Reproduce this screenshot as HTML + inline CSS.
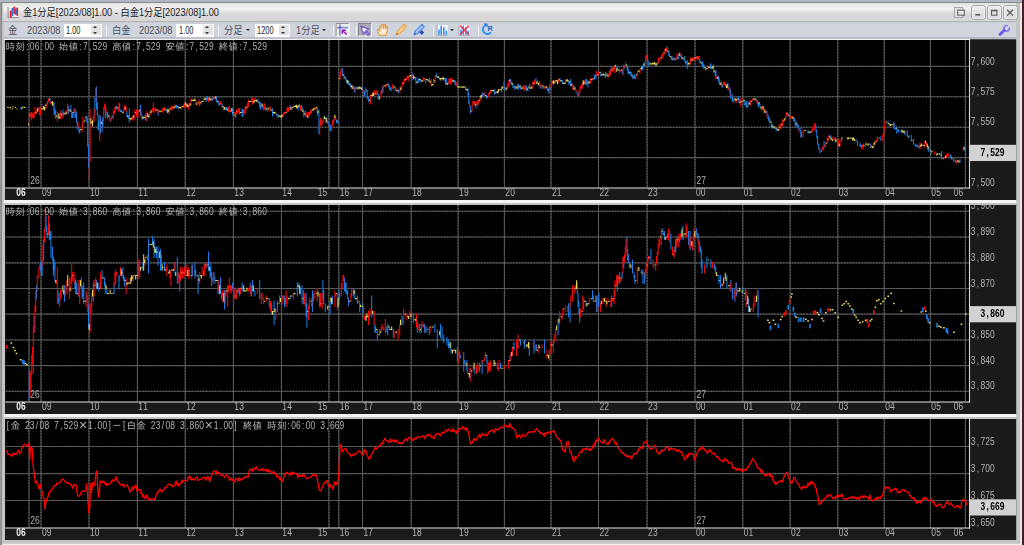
<!DOCTYPE html>
<html lang="ja"><head><meta charset="utf-8"><title>金1分足</title>
<style>
html,body{margin:0;padding:0}
body{width:1024px;height:545px;overflow:hidden;position:relative;background:#b1b5c1;font-family:"Liberation Sans","Noto Sans CJK JP",sans-serif}
.abs{position:absolute}
#dark{left:1021.8px;top:0;width:3px;height:545px;background:#442026}
#frame{left:0;top:1.8px;width:1022px;height:544px;background:linear-gradient(90deg,#999 0,#999 1px,#888 1px,#888 100%)}
#frame2{left:1.6px;top:3.4px;width:1020.2px;height:541.6px;background:linear-gradient(90deg,#c4c4c4 0,#c4c4c4 1018px,#e8e8ea 1018px);box-shadow:inset 0 -1.3px 0 #f0f0f0}
#title{left:2.8px;top:3.4px;width:1013.4px;height:17.4px;background:linear-gradient(180deg,#e2e2e2 0,#eeeeee 20%,#f0f0f0 35%,#e0e0e0 52%,#d8d8d8 62%,#d8d8d8 100%);border-bottom:0.9px solid #b2b2b2}
#ttext{left:23.4px;top:3.8px;height:17px;line-height:17px;font-size:10.6px;color:#1c1c1c;white-space:nowrap;transform:scaleX(.871);transform-origin:0 0}
#tool{left:3.7px;top:21.7px;width:1012.5px;height:17.2px;background:linear-gradient(180deg,#c6c9d1 0,#d0d4dd 1px,#d0d4dd 14.6px,#b4b9c6 15.2px,#b4b9c6 100%)}
.tl{position:absolute;top:24.4px;height:13px;line-height:13px;font-size:10.2px;color:#4a4f5c;white-space:nowrap;transform:scaleX(.91);transform-origin:0 0}
.inp{position:absolute;top:23.6px;height:13.2px;background:#fff;box-shadow:0 0 0 .5px #c9ccd4}
.inp span{position:absolute;left:2.2px;top:2.1px;font-size:10.2px;line-height:10px;color:#222;transform:scaleX(.73);transform-origin:0 0}
.spin{position:absolute;top:1.6px;right:1.2px;width:10px;height:10.2px;background:#e2e2e2;border-radius:1px}
.spin:before{content:"";position:absolute;left:2.5px;top:1.2px;border:2.5px solid transparent;border-top:0;border-bottom:2.6px solid #2c2c2c}
.spin:after{content:"";position:absolute;left:2.5px;bottom:1.2px;border:2.5px solid transparent;border-bottom:0;border-top:2.6px solid #2c2c2c}
.sep{position:absolute;top:26px;width:1.2px;height:10px;background:#eef0f4}
.dd{position:absolute;top:29.3px;width:0;height:0;border:2.5px solid transparent;border-bottom:0;border-top:2.8px solid #2a2a2a}
.wb{position:absolute;top:5.6px;width:13px;height:13.8px;border-radius:3px;background:linear-gradient(180deg,#ececec,#dadada);box-shadow:0 0 0 1px #a6a6a6, inset 0 0 0 .8px #f2f2f2}
</style></head><body>
<div class="abs" id="dark"></div>
<div class="abs" id="frame"></div>
<div class="abs" id="frame2"></div>
<div class="abs" id="title"></div>
<div class="abs" id="ttext">金1分足[2023/08]1.00 - 白金1分足[2023/08]1.00</div>
<div class="abs" id="tool"></div>
<span class="tl" style="left:8.3px">金</span>
<span class="tl" style="left:26.8px;letter-spacing:0">2023/08</span>
<div class="inp" style="left:63.8px;width:38.2px"><span>1.00</span><i class="spin"></i></div>
<div class="sep" style="left:105.6px"></div>
<span class="tl" style="left:112px;letter-spacing:0">白金</span>
<span class="tl" style="left:139px;letter-spacing:0">2023/08</span>
<div class="inp" style="left:176.4px;width:37.6px"><span>1.00</span><i class="spin"></i></div>
<div class="sep" style="left:218.3px"></div>
<span class="tl" style="left:224px;letter-spacing:0">分足</span>
<i class="dd" style="left:246px"></i>
<div class="inp" style="left:254.8px;width:35px"><span>1200</span><i class="spin"></i></div>
<span class="tl" style="left:296px;letter-spacing:0">1分足</span>
<i class="dd" style="left:322px"></i>
<i class="dd" style="left:449.6px"></i>
<div class="sep" style="left:332.6px"></div>
<div class="sep" style="left:355.8px"></div>
<div class="sep" style="left:432.6px"></div>
<div class="sep" style="left:477.8px"></div>
<div class="wb" style="left:971.9px"></div><div class="wb" style="left:987.7px"></div><div class="wb" style="left:1003.5px"></div>
<svg width="1024" height="40" viewBox="0 0 1024 40" style="position:absolute;left:0;top:0">
<!-- title icon -->
<rect x="8.6" y="7.2" width="10" height="10" fill="#f4f4f4"/>
<path d="M8.1 7.1V17.6H18.7" stroke="#8a8a8a" stroke-width="1" fill="none"/>
<path d="M10.7 11.4V16.5M14.4 7.6V13.2M17.2 8.6V14.9" stroke="#f01828" stroke-width="2" stroke-linecap="round"/>
<path d="M12.4 8.6V15.4M15.8 9.6V14" stroke="#1c78e0" stroke-width="1.9" stroke-linecap="round"/>
<!-- window buttons -->
<rect x="954.4" y="7.5" width="8.4" height="10" fill="#e4e4e4" stroke="#a4a4a4" stroke-width="1"/>
<rect x="957.6" y="10.2" width="6.8" height="5" fill="#e6e6e6" stroke="#767676" stroke-width="1.3"/>
<rect x="975.3" y="13.9" width="4.9" height="1.7" fill="#606060"/>
<rect x="991.5" y="10.6" width="5.4" height="4.6" fill="none" stroke="#606060" stroke-width="1.1"/>
<rect x="991" y="9.7" width="6.4" height="1.6" fill="#606060"/>
<path d="M1007.1 9.7L1012.9 15.6M1012.9 9.7L1007.1 15.6" stroke="#5a5a5a" stroke-width="1.35"/>
<!-- wrench -->
<circle cx="1006.6" cy="28.3" r="2.7" fill="#dcd8f6" stroke="#8a82e6" stroke-width="1.8"/>
<path d="M1006.6 28.3L1008.9 23.6L1011.6 26.4Z" fill="#d0d4dd"/>
<path d="M999.9 34.4L1004.3 30.3" stroke="#6658f2" stroke-width="2.7" stroke-linecap="round" fill="none"/>
<!-- icon1: crosshair toggle (pressed) -->
<rect x="335.6" y="22.9" width="13.4" height="13.2" fill="#ecece8"/>
<path d="M336.1 36.1V23.4H349" stroke="#8c8c8c" stroke-width="1" fill="none"/>
<path d="M336.1 36H349.2V23.4" stroke="#f6f6f6" stroke-width="1" fill="none"/>
<path d="M339.9 24.2V35.4M337 27.6H348.2" stroke="#8e8edc" stroke-width="1.7"/>
<circle cx="339.9" cy="27.6" r="1.1" fill="#5c5cc8"/>
<path d="M342.3 30.2H345.4M342.3 30.2V33.3M342.6 30.5L346.4 34.2" stroke="#9222b0" stroke-width="1.5" stroke-linecap="round" fill="none"/>
<!-- icon2: cursor (pressed) -->
<rect x="358" y="22.9" width="13.4" height="13.2" fill="#a9abb0"/>
<path d="M358.5 36.1V23.4H371.4" stroke="#858585" stroke-width="1" fill="none"/>
<path d="M358.5 36H371.6V23.4" stroke="#f4f4f6" stroke-width="1" fill="none"/>
<path d="M360.8 25.9L368.6 29.2L366 30.7L369.6 34.2L368.2 35.2L364.9 31.8L363.2 34.1Z" fill="#f0ecfb" stroke="#7a5fc8" stroke-width="1.3" stroke-linejoin="round"/>
<!-- icon3: hand -->
<path d="M379.6 35.3C378.6 33 377.4 31.3 377.3 30.2C377.4 29.2 378.5 29.3 379.3 30.4L380 31.3L379.6 26.6C379.6 25.4 381 25.4 381.2 26.5L381.6 28.6L381.8 25.2C381.9 24 383.4 24.1 383.5 25.2L383.6 28.4L384.3 25.3C384.6 24.3 385.9 24.6 385.8 25.7L385.5 28.9L386.3 27.2C386.8 26.3 387.8 26.7 387.6 27.7C387.2 30.2 387.2 33 385.4 35.4Z" fill="#fff1dc" stroke="#e39a35" stroke-width="1.1" stroke-linejoin="round"/>
<!-- icon4: pencil -->
<path d="M396.2 34.8L397.4 31.2L404.2 24.4L406.5 26.7L399.8 33.5Z" fill="#fad9a0" stroke="#e8a040" stroke-width="1.2" stroke-linejoin="round"/>
<path d="M396 35L397 32.8L398.2 34Z" fill="#a06820"/>
<!-- icon5: blue pencil + diamond -->
<path d="M414 34.8L415.2 31.2L422 24.4L424.3 26.7L417.6 33.5Z" fill="#a8c8f8" stroke="#4a86e0" stroke-width="1.2" stroke-linejoin="round"/>
<path d="M413.8 35L414.8 32.8L416 34Z" fill="#2858b0"/>
<path d="M421.8 30.1L424.2 32.5L421.8 34.9L419.4 32.5Z" fill="#2a52b4"/>
<!-- icon6: bar chart -->
<rect x="437" y="25" width="10.8" height="10" fill="#f4f5f8"/>
<path d="M437 25V35.2H447.8" stroke="#a8a8a8" stroke-width="1" fill="none"/>
<path d="M439 29.6V34.8M441.2 25.8V34.8M443.8 27.3V34.8M446.3 30.8V34.8" stroke="#2a86ff" stroke-width="1.5"/>
<!-- icon7: chart with red x -->
<rect x="459" y="25" width="10.8" height="10" fill="#f0f1f4"/>
<path d="M459 25V35.2H469.8" stroke="#a8a8a8" stroke-width="1" fill="none"/>
<path d="M461 29.6V34.8M463.2 25.8V34.8M465.8 27.3V34.8M468.3 30.8V34.8" stroke="#3a8cf8" stroke-width="1.5"/>
<path d="M460.2 25.8L468.8 34.4M468.8 25.8L460.2 34.4" stroke="#f03040" stroke-width="1.4"/>
<!-- icon8: refresh R -->
<path d="M485.5 25.3A4.6 4.6 0 1 0 491 32.4" fill="none" stroke="#2a92ee" stroke-width="1.9"/>
<path d="M483.3 23.6H487.6V27.6Z" fill="#2a76e8"/>
</svg>
<span class="abs" style="left:487.6px;top:25.3px;font:bold 7.2px/8px 'Liberation Sans',sans-serif;color:#1a64c0">R</span>

<svg width="1024" height="545" viewBox="0 0 1024 545" style="position:absolute;left:0;top:0;will-change:transform">
<style>.n{font-family:"Liberation Sans",sans-serif;text-anchor:middle}.w{font-family:"Liberation Sans","IPAGothic","Noto Sans CJK JP",sans-serif;text-anchor:middle}</style>
<rect x="5" y="39.3" width="1011.2" height="160.7" fill="#1a1a1a"/>
<rect x="5.8" y="39.9" width="963.7" height="148.1" fill="#000"/>
<path d="M5.8 66.4H969.5M5.8 96.8H969.5M5.8 127.2H969.5M5.8 157.6H969.5M29.0 39.9V188.0M41.0 39.9V188.0M89.0 39.9V188.0M137.4 39.9V188.0M185.2 39.9V188.0M233.4 39.9V188.0M281.4 39.9V188.0M328.9 39.9V188.0M338.8 39.9V188.0M362.5 39.9V188.0M411.2 39.9V188.0M458.1 39.9V188.0M504.4 39.9V188.0M551.0 39.9V188.0M598.5 39.9V188.0M647.1 39.9V188.0M695.0 39.9V188.0M742.8 39.9V188.0M790.1 39.9V188.0M837.8 39.9V188.0M884.2 39.9V188.0M930.4 39.9V188.0M965.4 39.9V188.0" stroke="#444444" stroke-width="1.1" fill="none"/>
<path d="M5.8 66.4H969.5M5.8 96.8H969.5M5.8 127.2H969.5M5.8 157.6H969.5M29.0 39.9V188.0M41.0 39.9V188.0M89.0 39.9V188.0M137.4 39.9V188.0M185.2 39.9V188.0M233.4 39.9V188.0M281.4 39.9V188.0M328.9 39.9V188.0M338.8 39.9V188.0M362.5 39.9V188.0M411.2 39.9V188.0M458.1 39.9V188.0M504.4 39.9V188.0M551.0 39.9V188.0M598.5 39.9V188.0M647.1 39.9V188.0M695.0 39.9V188.0M742.8 39.9V188.0M790.1 39.9V188.0M837.8 39.9V188.0M884.2 39.9V188.0M930.4 39.9V188.0M965.4 39.9V188.0" stroke="#6e6e6e" stroke-width="1" stroke-dasharray="1.45 1.45" fill="none"/>
<path d="M33.3 113.2V117.9M38.9 107.1V110.6M45.3 103.4V109.4M47.7 101.0V104.5M50.1 98.6V103.3M53.3 102.2V107.0M54.1 102.2V115.5M54.9 108.3V114.3M55.7 110.7V119.1M58.1 114.4V117.9M62.9 109.5V116.7M63.7 112.0V115.5M68.5 105.9V114.3M70.9 104.7V111.8M71.7 110.7V117.9M72.5 112.0V117.9M74.1 108.3V117.9M75.7 109.5V117.9M76.5 112.0V122.8M77.3 121.7V128.9M78.9 126.6V132.5M79.7 129.0V133.7M83.7 120.5V122.8M86.9 115.6V122.8M87.7 118.0V147.1M88.5 144.8V167.8M94.9 97.4V115.5M96.5 86.4V109.4M97.3 102.2V115.5M98.1 114.4V130.5M98.9 120.5V130.1M100.5 115.6V133.7M102.1 119.3V132.5M102.9 116.8V126.4M105.3 104.7V117.9M106.9 112.0V116.7M107.7 112.0V119.1M110.1 118.0V121.7M112.5 115.6V117.9M116.5 105.9V109.4M119.7 103.4V110.6M120.5 109.5V111.8M122.1 110.7V113.1M126.9 110.7V116.7M128.5 115.6V119.1M129.3 108.3V122.8M134.1 115.6V117.9M137.3 109.5V115.5M140.5 104.7V115.5M142.1 114.4V120.4M145.3 114.4V120.4M146.1 114.4V120.4M149.3 113.2V117.9M158.1 109.5V115.5M166.9 108.3V111.8M175.7 104.7V107.0M176.5 104.7V108.2M178.1 105.9V109.4M199.7 101.0V105.8M206.1 97.4V102.1M206.9 96.2V99.7M207.7 96.2V100.9M212.5 97.4V100.9M214.9 96.2V99.7M216.5 96.2V102.1M217.3 99.8V103.3M218.9 101.0V105.8M222.1 103.4V107.0M223.7 105.9V110.6M226.1 107.1V110.6M226.9 107.1V110.6M232.5 108.3V115.5M235.7 112.0V117.9M239.7 108.3V114.3M242.1 108.3V116.7M242.9 109.5V116.7M243.7 109.5V113.1M257.3 98.6V102.1M258.1 99.8V103.3M259.7 102.2V108.2M260.5 102.2V109.4M262.9 105.9V109.4M265.3 107.1V110.6M266.9 107.1V110.6M272.5 108.3V116.7M276.5 113.2V115.5M278.1 114.4V117.9M287.7 107.1V111.8M290.1 104.7V109.4M298.1 104.7V110.6M301.3 104.7V110.6M302.1 105.9V111.8M303.7 110.7V116.7M305.3 110.7V116.7M311.7 109.5V113.1M317.3 107.1V115.5M318.9 109.5V133.7M321.3 119.3V124.0M326.9 116.8V121.7M327.7 120.5V124.0M328.5 121.7V126.4M330.1 124.1V131.3M330.9 125.3V131.1M336.5 119.3V123.2M338.1 120.5V124.0M342.4 68.2V76.2M344.0 74.3V79.0M345.6 76.7V80.6M346.4 79.1V82.7M348.8 81.6V85.1M350.4 82.8V87.5M354.4 86.4V92.4M356.8 86.4V88.7M357.6 86.4V90.0M362.4 86.4V90.0M364.0 90.1V97.2M364.8 91.3V96.0M366.4 88.9V91.2M367.2 90.1V98.5M368.0 96.2V99.7M368.8 97.4V102.6M375.2 91.3V94.8M377.6 91.3V94.8M378.4 93.7V98.8M382.4 86.4V93.6M388.0 82.8V86.3M388.8 85.2V87.5M389.6 85.2V90.0M390.4 87.6V90.0M391.2 87.6V91.2M393.6 85.2V88.7M395.2 86.4V91.2M398.4 88.9V93.6M412.8 73.0V80.2M415.2 76.7V80.2M416.0 76.7V83.9M418.4 77.9V82.7M420.8 79.1V82.7M424.0 77.9V81.4M428.0 79.1V81.4M429.6 77.9V82.7M436.8 73.0V77.8M439.2 76.7V80.2M444.8 77.9V81.4M445.6 77.9V85.1M446.4 77.9V83.9M454.4 80.3V82.7M455.2 80.3V85.1M456.0 82.8V86.3M457.6 82.8V87.5M465.6 86.4V90.0M468.0 87.6V96.0M468.8 92.5V104.1M470.4 105.9V113.5M473.6 101.0V103.3M476.0 103.4V108.2M477.6 101.0V105.8M482.4 92.5V97.2M484.8 92.5V96.0M486.4 94.9V98.8M494.4 88.9V94.8M496.0 91.3V93.6M501.6 86.4V92.4M504.0 81.6V90.0M504.8 86.4V90.0M510.4 79.1V83.9M512.8 82.8V87.5M514.4 86.4V88.8M515.2 85.2V90.0M517.6 84.0V88.7M518.4 84.0V90.0M520.8 85.2V90.0M526.4 85.2V91.2M528.0 86.4V91.2M529.6 84.0V88.7M532.0 85.2V88.7M536.0 77.9V82.7M539.2 81.6V86.3M540.8 85.2V88.7M543.2 85.2V88.7M547.2 86.4V91.2M548.8 87.6V93.6M550.4 87.6V90.0M560.0 77.9V81.4M562.4 80.3V83.9M568.8 80.3V85.1M570.4 79.1V86.3M572.0 82.8V86.3M573.6 85.2V90.0M575.2 86.4V90.0M576.8 91.3V93.6M578.4 92.5V96.0M585.6 79.1V85.1M586.4 79.1V85.1M587.2 81.6V83.9M588.0 80.3V87.5M594.4 75.5V80.2M595.2 74.3V77.8M596.0 74.3V79.0M600.8 71.8V76.6M604.8 74.3V76.6M605.6 71.8V77.8M607.2 73.0V76.6M609.6 70.6V75.4M611.2 67.0V71.7M616.0 65.8V70.5M617.6 67.0V70.5M620.0 69.4V72.9M622.4 69.4V74.1M624.0 64.5V69.3M627.2 64.5V70.5M628.0 67.0V74.1M628.8 70.6V74.1M630.4 71.8V75.4M631.2 71.8V76.6M632.8 74.3V79.0M634.4 74.3V79.0M635.2 75.5V79.1M642.4 65.8V70.5M643.2 64.5V69.3M644.8 62.1V66.9M647.2 54.8V60.8M648.0 59.7V63.2M648.8 62.1V66.9M659.2 58.5V60.8M667.2 46.3V52.3M668.8 49.9V55.9M669.6 53.6V57.1M671.2 56.0V59.6M672.0 56.0V60.8M674.4 57.2V60.8M678.4 54.8V59.6M680.8 53.6V57.1M681.6 54.8V59.6M683.2 57.2V59.6M684.8 56.0V62.0M685.6 60.9V64.4M686.4 60.9V63.2M687.2 59.7V69.3M693.6 57.2V60.8M697.6 56.0V59.6M699.2 56.0V61.5M700.0 59.7V63.2M701.6 62.1V64.4M702.4 60.9V66.9M703.2 63.3V68.1M704.0 64.5V69.3M705.6 67.0V70.5M710.4 63.3V69.3M711.2 64.5V69.3M713.6 64.5V72.9M715.2 70.6V75.4M716.0 70.6V79.0M718.4 75.5V81.4M719.2 77.9V85.1M720.0 81.6V85.1M722.4 84.0V87.5M725.6 82.8V86.3M728.0 82.8V90.0M730.4 88.9V98.5M732.0 93.7V100.9M732.8 97.4V102.1M735.2 97.4V102.1M738.4 96.2V100.9M739.2 98.6V103.3M744.8 99.8V105.8M746.4 101.0V108.2M748.0 101.0V107.0M752.0 99.8V102.1M756.0 98.6V102.1M757.6 99.8V104.5M758.4 102.2V107.0M760.0 103.4V108.2M761.6 105.9V110.6M766.4 110.7V114.4M768.0 114.4V119.1M768.8 116.8V121.6M769.6 118.0V122.8M771.2 120.5V126.4M772.8 124.1V128.9M775.2 126.6V128.9M776.8 127.8V131.3M788.0 113.2V116.7M789.6 114.4V117.9M793.6 116.8V121.6M794.4 118.0V121.6M795.2 120.5V126.4M796.8 121.7V126.4M797.6 124.1V127.7M798.4 125.3V129.9M800.8 127.8V137.4M801.6 131.4V137.4M808.0 130.2V133.7M815.2 124.1V126.4M816.0 125.3V132.0M816.8 130.2V138.6M817.6 136.3V144.7M818.4 143.6V149.5M820.0 148.4V153.4M821.6 149.7V152.0M823.2 147.2V149.5M824.0 141.1V148.3M830.4 135.1V138.6M835.2 137.5V142.2M841.6 137.5V141.0M856.0 138.7V142.2M857.6 141.1V145.9M860.0 142.4V147.1M860.8 144.8V147.1M861.6 144.8V148.3M870.4 143.6V148.3M880.8 136.3V141.0M888.0 120.5V125.2M889.6 122.9V126.4M894.4 122.9V130.1M896.8 126.6V133.7M898.4 129.0V132.5M900.0 130.2V132.5M901.6 129.0V132.5M904.8 131.4V134.9M907.2 130.2V136.2M908.0 135.1V137.4M911.2 135.1V141.0M913.6 138.7V144.7M915.2 143.6V145.9M916.0 144.8V147.1M916.8 144.8V147.1M917.6 144.8V147.1M918.4 146.0V148.3M928.8 146.0V152.0M931.2 149.7V154.4M940.0 153.3V155.6M941.6 150.9V159.3M947.2 154.5V156.8M950.4 154.5V158.1M951.2 155.7V159.3M953.6 158.2V161.7M955.2 159.4V162.2M956.0 160.6V162.9M959.2 159.4V162.9M960.0 159.4V162.9M964.8 146.0V150.8M965.6 148.4V155.6M20.9 107.0V109.7" stroke="#1b7be0" stroke-width="1.05" fill="none" clip-path="url(#p0)"/>
<path d="M29.3 113.3V126.4M30.9 112.0V117.9M31.7 112.0V120.4M32.5 113.2V117.9M34.1 112.0V117.9M34.9 107.1V114.3M36.5 110.7V114.3M38.1 107.1V111.8M39.7 107.1V115.5M40.5 108.3V115.5M41.3 104.7V111.8M46.9 103.4V108.2M48.5 98.6V102.1M50.9 101.0V104.5M57.3 112.0V121.6M60.5 110.7V119.1M62.1 113.2V119.1M65.3 110.7V115.5M66.9 109.5V114.3M67.7 103.4V113.1M74.9 108.8V113.1M78.1 121.7V127.7M82.1 124.1V132.5M82.9 116.8V126.4M85.3 116.8V121.6M89.3 158.2V180.4M90.1 109.5V161.7M93.3 115.6V122.8M94.1 108.3V121.6M95.7 87.6V102.1M99.7 114.7V141.0M103.7 107.1V121.6M104.5 103.4V109.4M106.1 108.3V113.1M109.3 114.4V119.1M110.9 118.0V121.6M111.7 115.6V119.1M113.3 110.7V119.1M114.1 109.5V114.3M114.9 107.1V113.1M115.7 105.9V110.6M118.1 107.1V110.6M118.9 102.2V111.8M123.7 108.3V114.3M124.5 104.7V110.6M126.1 105.9V111.8M132.5 116.8V120.4M134.9 109.5V120.4M136.5 109.5V116.7M138.1 110.7V117.9M138.9 109.5V111.8M141.3 110.7V117.9M146.9 110.7V121.6M150.1 112.0V115.5M151.7 109.5V113.1M152.5 108.3V111.8M153.3 102.2V111.8M154.1 107.4V113.1M154.9 108.3V110.6M155.7 108.3V111.8M158.9 109.5V113.1M162.1 109.5V113.1M162.9 108.3V111.8M164.5 107.1V110.6M169.3 108.3V114.3M170.9 107.1V110.6M171.7 105.9V110.6M172.5 105.9V109.4M174.1 104.7V108.2M181.3 105.9V109.4M183.7 103.4V108.2M184.5 103.4V108.2M186.1 103.4V105.8M188.5 104.7V109.4M189.3 102.2V107.0M190.9 98.6V105.8M195.7 99.8V104.5M197.3 102.2V104.5M198.9 99.8V105.8M201.3 101.0V104.5M203.7 97.4V102.1M208.5 97.4V102.1M211.7 97.4V100.9M214.1 96.2V99.7M220.5 101.0V104.5M221.3 102.2V105.8M228.5 107.1V111.8M229.3 105.9V113.1M230.9 109.5V111.8M234.1 112.0V115.5M236.5 109.5V114.3M238.1 108.3V114.3M238.9 108.3V111.8M244.5 109.5V114.3M245.3 105.9V113.1M246.9 104.7V110.6M247.7 102.2V108.2M248.5 99.8V107.0M251.7 97.4V102.1M252.5 97.4V104.5M254.9 97.4V102.1M261.3 103.4V107.0M263.7 104.7V110.6M264.5 103.4V109.4M267.7 107.1V111.8M269.3 107.1V109.4M270.1 105.9V111.8M275.7 112.0V114.3M282.9 114.4V116.7M283.7 112.0V115.5M284.5 112.0V114.3M285.3 112.0V114.3M286.9 108.3V113.1M288.5 107.1V111.8M289.3 107.1V110.6M291.7 107.1V110.6M293.3 104.7V108.2M299.7 103.4V108.2M300.5 105.9V110.6M306.1 113.2V116.7M306.9 112.0V116.7M308.5 112.0V116.7M309.3 112.0V115.5M310.1 110.7V114.3M310.9 109.5V114.3M314.1 107.1V110.6M315.7 107.1V109.4M319.7 120.6V134.9M320.5 118.0V126.4M322.1 121.7V125.2M322.9 120.5V122.8M323.7 116.8V121.6M329.3 122.9V127.7M331.7 125.3V131.3M332.5 120.5V126.4M333.3 119.3V124.0M334.1 115.6V121.6M335.7 116.8V120.4M340.0 71.8V80.2M340.8 70.6V76.6M341.6 68.2V71.7M353.6 85.2V90.0M355.2 87.6V92.4M363.2 88.9V92.4M365.6 87.6V93.6M370.4 94.2V104.5M374.4 90.1V94.8M376.8 90.1V94.8M380.0 93.7V98.5M380.8 91.2V94.8M381.6 88.9V93.6M383.2 85.2V92.4M384.0 85.2V87.5M386.4 83.9V86.3M392.0 86.4V88.7M392.8 84.0V88.7M396.0 87.6V91.2M399.2 90.1V92.4M400.0 86.4V92.4M401.6 85.2V90.0M402.4 81.6V86.3M404.0 79.1V83.9M404.8 77.9V81.4M406.4 77.9V80.2M407.2 75.5V79.1M408.8 75.5V81.4M412.0 74.3V79.0M423.2 76.7V81.4M424.8 77.9V80.2M425.6 77.9V83.9M431.2 79.1V86.3M433.6 79.1V85.1M435.2 75.5V82.7M448.8 79.1V83.9M449.6 77.9V82.7M450.4 77.9V85.1M451.2 79.1V82.7M452.0 77.9V82.7M456.8 81.6V86.3M469.6 99.8V107.0M472.0 104.7V111.8M472.8 101.0V105.8M474.4 101.0V104.5M476.8 101.0V105.8M478.4 99.8V104.5M480.0 96.2V102.1M484.0 91.8V96.0M488.0 94.9V98.5M488.8 92.5V96.0M490.4 89.8V93.6M499.2 88.9V91.2M503.2 85.9V88.7M505.6 87.6V91.2M507.2 84.0V90.0M508.0 82.8V86.3M508.8 80.3V87.5M511.2 80.3V83.9M523.2 85.2V88.7M524.0 85.2V91.2M524.8 86.4V90.0M525.6 85.2V90.0M532.8 81.6V88.7M534.4 80.3V85.1M535.2 79.1V82.7M537.6 80.3V83.9M540.0 82.8V87.5M541.6 85.2V88.7M544.8 86.4V88.7M545.6 85.2V88.7M549.6 84.0V93.6M551.2 84.0V88.7M552.0 80.3V85.1M555.2 80.3V83.9M558.4 79.1V82.7M565.6 79.1V83.9M572.8 84.0V90.0M576.0 88.9V92.4M577.6 92.5V96.0M579.2 90.1V96.0M580.0 86.4V92.4M580.8 85.2V88.7M581.6 83.9V88.7M582.4 82.8V88.7M584.8 80.3V83.9M590.4 77.9V83.9M592.8 77.9V80.2M596.8 70.6V76.6M598.4 71.8V75.4M599.2 71.8V74.1M608.8 73.0V77.8M610.4 69.4V75.4M612.8 67.0V71.7M614.4 65.8V72.9M620.8 69.4V71.7M623.2 68.2V75.4M624.8 65.8V68.1M625.6 62.5V68.1M636.0 74.3V79.0M637.6 70.6V75.4M640.0 68.2V74.1M645.6 56.0V63.2M646.4 54.8V59.6M649.6 62.1V66.9M657.6 62.1V64.4M658.4 57.2V63.2M660.0 57.2V60.8M661.6 54.5V59.6M662.4 53.6V58.3M663.2 52.4V55.9M664.8 48.7V54.7M666.4 47.5V52.3M675.2 58.5V60.8M676.8 53.6V59.6M680.0 52.4V55.9M690.4 57.2V64.4M692.8 57.2V60.8M694.4 57.2V60.8M696.8 56.0V59.6M698.4 56.0V59.6M708.0 65.8V69.3M716.8 75.5V79.0M721.6 81.6V87.5M723.2 82.8V85.1M724.0 81.6V86.3M724.8 81.6V85.1M728.8 87.6V90.0M729.6 86.4V93.6M731.2 93.7V96.0M733.6 98.6V103.3M736.8 98.6V103.3M740.8 97.4V107.0M743.2 98.6V103.3M750.4 99.8V105.8M752.8 98.6V100.9M756.8 99.8V103.3M762.4 105.9V109.4M764.0 108.3V113.1M765.6 110.7V113.1M767.2 110.7V117.9M779.2 124.1V130.1M780.8 123.5V128.9M782.4 119.3V126.4M784.0 119.1V121.6M785.6 115.6V119.1M786.4 112.0V116.7M790.4 115.6V117.9M791.2 115.6V119.1M792.0 115.6V119.1M799.2 127.8V132.5M803.2 129.0V137.4M812.0 129.0V132.5M812.8 126.6V131.3M814.4 122.9V130.1M819.2 147.2V149.5M822.4 147.0V150.8M824.8 144.8V147.1M825.6 142.4V147.1M827.2 137.5V143.5M828.8 135.1V141.0M832.0 136.3V141.0M834.4 137.5V139.8M838.4 138.7V145.9M840.0 138.7V147.1M862.4 144.8V149.5M863.2 143.6V148.3M865.6 142.6V147.1M871.2 144.8V148.3M873.6 142.4V148.3M875.2 141.1V144.7M876.8 138.7V142.2M877.6 136.7V141.0M882.4 135.1V141.0M883.2 133.8V136.2M884.0 126.6V136.2M884.8 120.6V128.9M893.6 121.7V127.7M897.6 129.0V132.5M905.6 131.4V133.7M919.2 144.8V148.3M920.0 142.4V149.5M924.8 141.1V148.3M926.4 142.4V145.9M934.4 150.9V154.4M944.0 156.9V159.3M946.4 153.3V158.1M948.8 153.3V156.8M956.8 159.4V164.1M963.2 147.2V150.8" stroke="#ee0a0a" stroke-width="1.05" fill="none" clip-path="url(#p0)"/>
<path d="M28.5 123.5V125.2M30.1 114.4V115.5M35.7 112.0V113.1M37.3 108.3V111.8M42.1 108.3V109.4M42.9 108.3V109.4M43.7 105.9V109.4M44.5 107.1V110.6M46.1 104.7V105.8M49.3 98.6V99.7M51.7 102.2V103.3M52.5 101.0V105.5M56.5 115.6V116.7M58.9 113.2V119.1M59.7 116.8V117.9M61.3 113.3V115.5M64.5 113.2V114.3M66.1 112.0V114.3M69.3 109.5V110.6M70.1 109.5V111.8M73.3 112.0V113.1M80.5 129.0V130.1M81.3 129.0V130.1M84.5 120.5V121.6M86.1 116.8V117.9M90.9 118.0V124.0M91.7 121.7V122.8M92.5 120.5V126.4M101.3 121.7V124.0M108.5 115.6V116.7M117.3 107.1V108.2M121.3 110.7V111.8M122.9 112.0V113.1M125.3 107.1V109.4M127.7 115.6V117.3M130.1 118.0V119.1M130.9 118.0V120.2M131.7 118.0V119.1M133.3 115.3V117.9M135.7 112.0V113.1M139.7 109.5V111.4M142.9 116.8V119.1M143.7 116.8V117.9M144.5 116.8V117.9M147.7 113.2V116.7M148.5 115.6V117.3M150.9 110.3V113.1M156.5 109.5V110.6M157.3 109.5V110.6M159.7 110.7V111.8M160.5 110.7V111.8M161.3 110.7V111.8M163.7 108.3V109.4M165.3 109.5V110.6M166.1 109.5V110.6M167.7 109.5V113.1M168.5 109.5V111.8M170.1 108.3V109.4M173.3 107.1V108.2M174.9 105.9V108.2M177.3 105.9V107.0M178.9 107.1V108.2M179.7 107.1V108.2M180.5 107.1V108.5M182.1 105.9V107.0M182.9 105.9V107.0M185.3 102.2V105.5M186.9 103.4V107.0M187.7 104.7V107.0M190.1 103.4V105.8M191.7 99.8V100.9M192.5 99.8V100.9M193.3 99.8V100.9M194.1 99.5V100.9M194.9 98.6V100.9M196.5 103.4V104.7M198.1 102.2V103.3M200.5 102.2V103.3M202.1 101.0V102.1M202.9 101.0V102.1M204.5 98.6V99.7M205.3 97.7V99.7M209.3 97.4V99.7M210.1 98.6V100.6M210.9 98.6V99.7M213.3 97.4V98.5M215.7 96.2V98.5M218.1 101.0V102.1M219.7 103.4V104.5M222.9 105.9V107.6M224.5 107.1V109.4M225.3 108.3V109.4M227.7 108.8V110.6M230.1 110.7V111.8M231.7 108.3V111.4M233.3 112.0V113.1M234.9 114.4V115.8M237.3 110.7V111.8M240.5 112.0V113.1M241.3 112.0V113.1M246.1 107.1V108.2M249.3 101.0V102.1M250.1 101.0V102.1M250.9 101.0V102.1M253.3 101.0V102.1M254.1 99.8V103.3M255.7 99.8V100.9M256.5 99.8V101.7M258.9 102.2V103.3M262.1 103.4V107.0M266.1 108.3V109.4M268.5 108.3V109.4M270.9 109.5V110.6M271.7 109.5V110.6M273.3 112.0V113.1M274.1 111.8V114.3M274.9 112.0V113.1M277.3 114.4V115.5M278.9 115.6V116.7M279.7 115.6V116.7M280.5 115.6V116.7M281.3 115.6V118.2M282.1 114.4V116.7M286.1 112.0V113.1M290.9 107.1V109.4M292.5 107.1V108.2M294.1 105.9V107.0M294.9 105.9V107.0M295.7 105.3V107.0M296.5 104.7V108.2M297.3 105.9V108.2M298.9 104.7V107.0M302.9 109.5V111.8M304.5 113.2V114.4M307.7 115.3V117.9M312.5 109.5V110.6M313.3 108.3V110.6M314.9 108.3V109.4M316.5 107.1V108.2M318.1 110.7V112.9M324.5 116.2V119.1M325.3 118.0V119.1M326.1 118.0V122.8M334.9 114.7V117.9M337.3 120.5V121.6M339.2 77.9V79.1M343.2 74.3V75.4M344.8 76.7V77.8M347.2 80.3V82.7M348.0 80.3V83.9M349.6 84.0V85.1M351.2 85.2V87.0M352.0 85.2V88.7M352.8 87.6V88.7M356.0 87.6V88.7M358.4 87.6V88.7M359.2 86.4V88.7M360.0 86.8V88.7M360.8 87.6V88.7M361.6 87.6V90.0M369.6 99.8V100.9M371.2 94.9V96.0M372.0 94.9V96.0M372.8 92.5V96.0M373.6 92.5V95.9M376.0 93.7V94.8M379.2 96.2V99.7M384.8 85.2V86.3M385.6 85.2V86.3M387.2 84.0V85.1M394.4 86.4V87.5M396.8 90.1V91.2M397.6 90.1V91.2M400.8 87.6V90.0M403.2 82.8V83.9M405.6 79.1V80.2M408.0 76.7V77.8M409.6 75.5V76.6M410.4 75.1V76.6M411.2 75.5V76.6M413.6 75.5V79.0M414.4 76.7V77.8M416.8 81.6V82.7M417.6 81.6V82.7M419.2 79.1V80.6M420.0 79.1V80.2M421.6 80.3V81.4M422.4 80.3V81.4M426.4 79.1V80.2M427.2 79.1V80.2M428.8 80.3V81.4M430.4 81.6V82.7M432.0 84.0V85.9M432.8 84.0V85.1M434.4 80.3V81.4M436.0 75.5V76.6M437.6 76.7V77.8M438.4 76.0V77.8M440.0 77.9V79.0M440.8 77.9V80.6M441.6 77.9V79.0M442.4 77.9V79.0M443.2 76.7V80.2M444.0 77.9V79.1M447.2 82.8V85.0M448.0 82.8V83.9M452.8 80.3V82.1M453.6 80.3V81.4M458.4 85.9V87.5M459.2 86.4V87.5M460.0 86.4V87.5M460.8 86.4V87.5M461.6 86.4V87.5M462.4 86.4V87.5M463.2 86.4V87.9M464.0 86.4V87.5M464.8 86.4V87.5M466.4 88.9V90.0M467.2 88.9V90.9M471.2 110.7V111.8M475.2 103.4V105.5M479.2 99.8V100.9M480.8 95.6V98.5M481.6 94.9V97.2M483.2 93.7V94.8M485.6 94.9V96.0M487.2 96.2V97.2M489.6 92.5V93.6M491.2 90.1V91.2M492.0 90.1V91.2M492.8 90.1V91.2M493.6 90.1V91.2M495.2 92.5V93.6M496.8 91.3V92.4M497.6 91.3V93.6M498.4 88.9V92.4M500.0 88.9V90.0M500.8 88.9V90.0M502.4 86.4V88.7M506.4 87.6V89.4M509.6 79.5V81.4M512.0 82.8V85.0M513.6 86.4V87.5M516.0 86.4V87.5M516.8 86.4V88.7M519.2 86.4V87.5M520.0 85.2V87.5M521.6 87.6V88.7M522.4 87.6V88.8M527.2 88.3V90.0M528.8 86.4V87.5M530.4 87.6V88.7M531.2 86.8V88.7M533.6 82.8V83.9M536.8 81.6V83.9M538.4 82.8V85.0M542.4 85.2V86.3M544.0 86.4V87.5M546.4 86.4V87.9M548.0 88.9V90.0M552.8 81.6V82.7M553.6 80.3V83.9M554.4 81.6V82.7M556.0 80.1V81.4M556.8 80.3V81.4M557.6 80.3V83.9M559.2 78.9V80.2M560.8 80.3V81.4M561.6 80.3V81.4M563.2 82.8V83.9M564.0 82.4V83.9M564.8 82.8V83.9M566.4 80.3V81.4M567.2 78.9V81.4M568.0 80.3V81.4M569.6 81.6V82.7M571.2 84.0V85.9M574.4 87.6V89.4M583.2 80.3V85.1M584.0 81.6V83.9M588.8 81.6V83.5M589.6 81.6V82.7M591.2 78.9V80.2M592.0 79.1V80.2M593.6 77.9V79.0M597.6 74.3V75.4M600.0 71.8V72.9M601.6 74.3V75.4M602.4 74.3V75.4M603.2 73.6V75.4M604.0 74.3V75.4M606.4 74.3V75.4M608.0 75.1V76.6M612.0 69.4V70.5M613.6 68.2V69.3M615.2 64.8V66.9M616.8 68.2V71.7M618.4 69.4V70.5M619.2 69.4V70.5M621.6 69.4V70.5M626.4 64.5V65.6M629.6 71.8V72.9M632.0 75.5V76.6M633.6 76.7V77.8M636.8 74.3V75.4M638.4 70.6V71.7M639.2 70.6V71.7M640.8 68.2V69.3M641.6 67.0V69.3M644.0 63.3V65.6M650.4 63.3V64.4M651.2 63.3V64.4M652.0 63.3V64.4M652.8 62.5V64.4M653.6 63.3V64.4M654.4 62.1V64.4M655.2 63.3V64.4M656.0 63.3V65.9M656.8 63.3V64.4M660.8 57.2V58.3M664.0 52.4V53.5M665.6 48.7V51.0M668.0 51.2V52.3M670.4 56.0V57.1M672.8 58.5V59.6M673.6 58.5V59.6M676.0 58.5V59.6M677.6 57.2V58.3M679.2 53.1V55.9M682.4 57.2V58.6M684.0 58.5V59.6M688.0 63.3V64.4M688.8 62.5V64.4M689.6 63.3V64.4M691.2 59.7V60.8M692.0 58.5V60.8M695.2 57.2V58.3M696.0 57.2V58.3M700.8 62.1V63.2M704.8 67.0V68.1M706.4 68.2V69.3M707.2 68.2V69.3M708.8 66.3V68.1M709.6 67.0V68.1M712.0 67.0V68.1M712.8 65.8V68.8M714.4 70.6V71.7M717.6 76.7V79.1M720.8 82.8V85.0M726.4 85.2V87.9M727.2 84.0V87.9M734.4 98.6V99.7M736.0 98.6V100.9M737.6 98.6V99.7M740.0 101.5V103.3M741.6 101.0V102.1M742.4 101.0V102.1M744.0 99.8V100.9M745.6 103.4V104.5M747.2 105.9V107.0M748.8 103.4V104.5M749.6 102.4V104.5M751.2 101.0V102.1M753.6 98.6V99.7M754.4 98.6V99.7M755.2 98.6V99.7M759.2 102.2V104.5M760.8 107.1V108.2M763.2 105.9V109.4M764.8 109.5V113.1M770.4 121.7V122.8M772.0 125.3V127.6M773.6 126.6V127.7M774.4 126.6V127.7M776.0 127.8V129.0M777.6 129.0V130.1M778.4 129.0V131.1M780.0 126.6V127.7M781.6 124.1V125.2M783.2 120.5V121.6M784.8 118.0V120.4M787.2 113.2V114.3M788.8 114.4V115.5M792.8 116.8V118.8M796.0 122.9V124.6M804.8 130.2V131.3M805.6 130.2V131.3M808.8 131.4V132.5M809.6 131.4V132.9M810.4 131.4V132.5M811.2 131.4V132.5M826.4 142.4V143.5M828.0 138.7V139.8M829.6 136.3V137.4M831.2 137.5V139.9M832.8 138.7V141.0M836.0 138.7V142.2M839.2 143.6V146.6M842.4 137.5V138.6M847.2 137.5V138.6M848.0 137.5V139.8M848.8 137.5V138.7M849.6 137.5V138.6M850.4 137.5V138.6M852.0 137.5V139.3M852.8 137.5V141.0M853.6 137.5V139.8M854.4 138.7V141.0M864.0 144.8V145.9M866.4 143.6V144.7M868.0 143.6V145.8M868.8 143.6V144.7M872.0 146.0V147.1M872.8 146.0V148.3M874.4 142.4V144.7M876.0 141.1V142.2M879.2 137.5V138.6M886.4 121.7V122.8M888.8 122.9V124.0M890.4 124.1V126.1M891.2 124.1V125.2M892.8 124.1V125.2M896.0 127.8V128.9M902.4 130.2V132.5M903.2 131.4V132.5M904.0 130.2V132.9M908.8 136.3V137.4M912.0 139.9V141.0M920.8 144.8V147.1M921.6 143.6V145.9M923.2 144.8V145.9M924.0 144.8V145.9M925.6 140.6V143.5M927.2 143.6V147.1M928.0 146.0V149.6M930.4 149.7V150.8M932.0 150.9V152.0M936.8 153.3V155.6M937.6 153.3V154.4M939.2 153.3V154.6M940.8 154.5V155.6M943.2 158.2V159.3M945.6 155.8V158.1M952.0 158.2V159.3M957.6 160.6V161.7M958.4 160.6V162.2M964.0 147.0V149.5M7.3 106.9V108.1M8.9 107.0V108.2M10.5 107.1V108.3M12.1 108.5V109.7M12.9 106.3V107.5M15.3 106.7V107.9M16.9 108.4V109.6M21.7 107.8V109.0M22.5 106.5V107.7M24.1 106.8V108.0M24.9 106.9V108.1" stroke="#e6d860" stroke-width="1.05" fill="none" clip-path="url(#p0)"/>
<path d="M4.0 39.3H970.1" stroke="#f0f0f0" stroke-width="1.2"/>
<path d="M5.3 188.0H970.1" stroke="#9c9c9c" stroke-width="1.5"/>
<path d="M969.5 39.9V188.5" stroke="#d8d8d8" stroke-width="1.1"/>
<text transform="translate(5.60 49.60)" x="4.84 14.52" y="0" font-size="9.7" fill="#b2b2b2" class="w">時刻</text>
<text transform="translate(5.60 49.90) scale(0.80 1)" x="27.23 33.27 39.32 45.37 51.42 57.48" y="0" font-size="10.6" fill="#b2b2b2" class="n">:06:00</text>
<text transform="translate(5.60 49.60)" x="58.08 67.76" y="0" font-size="9.7" fill="#b2b2b2" class="w">始値</text>
<text transform="translate(5.60 49.90) scale(0.80 1)" x="93.78 99.83 105.88 111.93 117.98 124.03" y="0" font-size="10.6" fill="#b2b2b2" class="n">:7,529</text>
<text transform="translate(5.60 49.60)" x="111.32 121.00" y="0" font-size="9.7" fill="#b2b2b2" class="w">高値</text>
<text transform="translate(5.60 49.90) scale(0.80 1)" x="160.33 166.38 172.43 178.48 184.53 190.58" y="0" font-size="10.6" fill="#b2b2b2" class="n">:7,529</text>
<text transform="translate(5.60 49.60)" x="164.56 174.24" y="0" font-size="9.7" fill="#b2b2b2" class="w">安値</text>
<text transform="translate(5.60 49.90) scale(0.80 1)" x="226.88 232.93 238.98 245.03 251.08 257.13" y="0" font-size="10.6" fill="#b2b2b2" class="n">:7,529</text>
<text transform="translate(5.60 49.60)" x="217.80 227.48" y="0" font-size="9.7" fill="#b2b2b2" class="w">終値</text>
<text transform="translate(5.60 49.90) scale(0.80 1)" x="293.43 299.48 305.53 311.58 317.63 323.68" y="0" font-size="10.6" fill="#b2b2b2" class="n">:7,529</text>
<text transform="translate(970.70 64.50) scale(0.80 1)" x="3.02 9.07 15.12 21.17 27.23" y="0" font-size="10.6" fill="#b2b2b2" class="n">7,600</text>
<text transform="translate(970.70 94.90) scale(0.80 1)" x="3.02 9.07 15.12 21.17 27.23" y="0" font-size="10.6" fill="#b2b2b2" class="n">7,575</text>
<text transform="translate(970.70 125.30) scale(0.80 1)" x="3.02 9.07 15.12 21.17 27.23" y="0" font-size="10.6" fill="#b2b2b2" class="n">7,550</text>
<text transform="translate(970.70 186.10) scale(0.80 1)" x="3.02 9.07 15.12 21.17 27.23" y="0" font-size="10.6" fill="#b2b2b2" class="n">7,500</text>
<rect x="970" y="144.8" width="46" height="16.2" fill="#d2d2d2"/>
<text transform="translate(980.40 155.50) scale(0.80 1)" x="3.02 9.07 15.12 21.17 27.23" y="0" font-size="10.6" fill="#000" font-weight="bold" class="n">7,529</text>
<text transform="translate(16.20 195.70) scale(0.80 1)" x="3.02 9.07" y="0" font-size="10.6" fill="#f0f0f0" font-weight="bold" class="n">06</text>
<text transform="translate(41.90 195.70) scale(0.80 1)" x="3.02 9.07" y="0" font-size="10.6" fill="#b2b2b2" class="n">09</text>
<text transform="translate(89.90 195.70) scale(0.80 1)" x="3.02 9.07" y="0" font-size="10.6" fill="#b2b2b2" class="n">10</text>
<text transform="translate(138.30 195.70) scale(0.80 1)" x="3.02 9.07" y="0" font-size="10.6" fill="#b2b2b2" class="n">11</text>
<text transform="translate(186.15 195.70) scale(0.80 1)" x="3.02 9.07" y="0" font-size="10.6" fill="#b2b2b2" class="n">12</text>
<text transform="translate(234.30 195.70) scale(0.80 1)" x="3.02 9.07" y="0" font-size="10.6" fill="#b2b2b2" class="n">13</text>
<text transform="translate(282.30 195.70) scale(0.80 1)" x="3.02 9.07" y="0" font-size="10.6" fill="#b2b2b2" class="n">14</text>
<text transform="translate(317.60 195.70) scale(0.80 1)" x="3.02 9.07" y="0" font-size="10.6" fill="#b2b2b2" class="n">15</text>
<text transform="translate(339.65 195.70) scale(0.80 1)" x="3.02 9.07" y="0" font-size="10.6" fill="#b2b2b2" class="n">16</text>
<text transform="translate(363.40 195.70) scale(0.80 1)" x="3.02 9.07" y="0" font-size="10.6" fill="#b2b2b2" class="n">17</text>
<text transform="translate(412.15 195.70) scale(0.80 1)" x="3.02 9.07" y="0" font-size="10.6" fill="#b2b2b2" class="n">18</text>
<text transform="translate(459.00 195.70) scale(0.80 1)" x="3.02 9.07" y="0" font-size="10.6" fill="#b2b2b2" class="n">19</text>
<text transform="translate(505.30 195.70) scale(0.80 1)" x="3.02 9.07" y="0" font-size="10.6" fill="#b2b2b2" class="n">20</text>
<text transform="translate(551.90 195.70) scale(0.80 1)" x="3.02 9.07" y="0" font-size="10.6" fill="#b2b2b2" class="n">21</text>
<text transform="translate(599.40 195.70) scale(0.80 1)" x="3.02 9.07" y="0" font-size="10.6" fill="#b2b2b2" class="n">22</text>
<text transform="translate(648.00 195.70) scale(0.80 1)" x="3.02 9.07" y="0" font-size="10.6" fill="#b2b2b2" class="n">23</text>
<text transform="translate(695.90 195.70) scale(0.80 1)" x="3.02 9.07" y="0" font-size="10.6" fill="#b2b2b2" class="n">00</text>
<text transform="translate(743.65 195.70) scale(0.80 1)" x="3.02 9.07" y="0" font-size="10.6" fill="#b2b2b2" class="n">01</text>
<text transform="translate(791.00 195.70) scale(0.80 1)" x="3.02 9.07" y="0" font-size="10.6" fill="#b2b2b2" class="n">02</text>
<text transform="translate(838.65 195.70) scale(0.80 1)" x="3.02 9.07" y="0" font-size="10.6" fill="#b2b2b2" class="n">03</text>
<text transform="translate(885.15 195.70) scale(0.80 1)" x="3.02 9.07" y="0" font-size="10.6" fill="#b2b2b2" class="n">04</text>
<text transform="translate(931.30 195.70) scale(0.80 1)" x="3.02 9.07" y="0" font-size="10.6" fill="#b2b2b2" class="n">05</text>
<text transform="translate(953.60 195.70) scale(0.80 1)" x="3.02 9.07" y="0" font-size="10.6" fill="#b2b2b2" class="n">06</text>
<text transform="translate(30.20 184.40) scale(0.80 1)" x="3.02 9.07" y="0" font-size="10.6" fill="#b2b2b2" class="n">26</text>
<text transform="translate(696.40 184.40) scale(0.80 1)" x="3.02 9.07" y="0" font-size="10.6" fill="#b2b2b2" class="n">27</text>
<rect x="4" y="200.0" width="1012.2" height="3.2" fill="#f5f5f5"/>
<rect x="5" y="204.0" width="1011.2" height="210.0" fill="#1a1a1a"/>
<rect x="5.8" y="205.0" width="963.7" height="197.0" fill="#000"/>
<path d="M5.8 211.2H969.5M5.8 237.0H969.5M5.8 262.9H969.5M5.8 288.5H969.5M5.8 314.1H969.5M5.8 340.0H969.5M5.8 365.6H969.5M5.8 391.3H969.5M29.0 205.0V402.0M41.0 205.0V402.0M89.0 205.0V402.0M137.4 205.0V402.0M185.2 205.0V402.0M233.4 205.0V402.0M281.4 205.0V402.0M328.9 205.0V402.0M338.8 205.0V402.0M362.5 205.0V402.0M411.2 205.0V402.0M458.1 205.0V402.0M504.4 205.0V402.0M551.0 205.0V402.0M598.5 205.0V402.0M647.1 205.0V402.0M695.0 205.0V402.0M742.8 205.0V402.0M790.1 205.0V402.0M837.8 205.0V402.0M884.2 205.0V402.0M930.4 205.0V402.0M965.4 205.0V402.0" stroke="#444444" stroke-width="1.1" fill="none"/>
<path d="M5.8 211.2H969.5M5.8 237.0H969.5M5.8 262.9H969.5M5.8 288.5H969.5M5.8 314.1H969.5M5.8 340.0H969.5M5.8 365.6H969.5M5.8 391.3H969.5M29.0 205.0V402.0M41.0 205.0V402.0M89.0 205.0V402.0M137.4 205.0V402.0M185.2 205.0V402.0M233.4 205.0V402.0M281.4 205.0V402.0M328.9 205.0V402.0M338.8 205.0V402.0M362.5 205.0V402.0M411.2 205.0V402.0M458.1 205.0V402.0M504.4 205.0V402.0M551.0 205.0V402.0M598.5 205.0V402.0M647.1 205.0V402.0M695.0 205.0V402.0M742.8 205.0V402.0M790.1 205.0V402.0M837.8 205.0V402.0M884.2 205.0V402.0M930.4 205.0V402.0M965.4 205.0V402.0" stroke="#6e6e6e" stroke-width="1" stroke-dasharray="1.45 1.45" fill="none"/>
<path d="M770.5 325.6V330.2M778.4 323.7V328.3M788.2 304.9V309.5M793.4 306.8V311.4M794.9 312.4V317.0M798.7 317.3V321.9M801.0 317.3V321.9M803.6 317.3V321.9M810.0 323.7V328.3M820.5 308.6V313.2M853.2 309.0V313.6M922.8 307.5V312.1M926.9 314.3V318.9M928.1 318.0V322.6M937.1 322.9V327.5M946.5 327.8V332.4M947.6 329.3V333.9M22.6 359.4V364.0M24.1 360.2V364.8" stroke="#1b7be0" stroke-width="1.7" fill="none"/>
<path d="M784.4 312.3V316.3M785.9 310.1V314.1M789.7 299.5V303.5M813.7 310.8V314.8M815.6 310.1V314.1M828.0 307.8V311.8M867.2 319.1V323.1M868.7 323.2V327.2M873.9 310.1V314.1M924.7 306.3V310.3M6.8 344.7V348.7" stroke="#ee0a0a" stroke-width="1.7" fill="none"/>
<path d="M767.9 319.6V321.1M769.4 321.9V323.4M773.5 319.6V321.1M775.4 323.4V324.9M780.7 318.8V320.3M782.2 315.8V317.3M791.2 296.3V297.8M791.9 293.3V294.8M796.4 316.6V318.1M805.9 318.5V320.0M808.1 320.3V321.8M811.9 318.8V320.3M817.5 312.1V313.6M819.0 314.0V315.5M822.0 317.7V319.2M823.5 320.3V321.8M825.8 312.1V313.6M830.3 309.1V310.6M832.6 309.1V310.6M835.2 312.1V313.6M838.2 316.6V318.1M842.3 304.6V306.1M844.2 303.0V304.5M846.1 300.8V302.3M848.3 303.0V304.5M849.9 305.3V306.8M851.7 308.3V309.8M854.7 314.3V315.8M856.2 316.6V318.1M858.1 319.6V321.1M860.0 321.9V323.4M862.6 321.1V322.6M865.6 319.6V321.1M870.2 320.3V321.8M871.7 318.8V320.3M875.4 306.4V307.9M876.9 300.0V301.5M878.8 298.9V300.4M880.7 303.0V304.5M882.9 300.8V302.3M885.2 297.8V299.3M888.2 295.5V297.0M891.2 292.5V294.0M893.9 302.7V304.2M901.4 310.2V311.7M921.3 311.3V312.8M925.8 310.6V312.1M929.6 321.9V323.4M939.0 325.6V327.1M940.9 326.4V327.9M943.9 327.1V328.6M954.0 331.6V333.1M961.5 323.4V324.9M965.7 313.2V314.7M11.3 342.2V343.7M13.5 346.7V348.2M15.0 349.7V351.2M16.5 352.7V354.2M20.7 359.1V360.6M25.6 362.8V364.3M27.1 364.0V365.5" stroke="#e6d860" stroke-width="1.7" fill="none"/>
<path d="M29.3 370.3V399.8M34.1 316.1V332.7M36.5 285.2V299.2M40.5 261.9V270.8M41.3 264.5V276.0M42.1 259.4V276.0M43.7 238.7V260.5M46.1 215.5V232.1M46.9 225.8V238.2M49.3 223.2V239.8M50.1 231.0V239.8M50.9 231.0V257.9M52.5 246.5V260.5M53.3 256.8V276.0M54.1 259.4V270.8M54.9 261.9V281.1M58.1 290.3V302.1M58.9 298.1V304.3M64.5 285.2V301.8M74.9 277.4V288.9M75.7 280.0V294.0M76.5 282.6V294.0M78.9 285.2V296.6M81.3 277.4V288.9M82.1 287.8V299.2M82.9 285.2V296.6M83.7 282.6V304.3M86.9 292.9V301.8M88.5 303.2V328.4M93.3 282.6V301.8M96.5 280.0V288.9M98.9 282.6V291.4M102.1 269.7V278.5M104.5 277.4V286.3M105.3 282.6V294.0M106.9 287.8V294.6M114.1 282.6V294.0M118.9 274.9V288.9M122.9 267.1V278.5M123.7 274.9V281.1M124.5 277.4V286.3M138.9 261.9V278.5M142.9 261.9V270.8M147.7 254.2V260.5M148.5 238.7V273.4M152.5 236.2V245.0M154.1 238.7V257.9M156.5 246.5V257.9M158.1 246.5V265.6M160.5 249.1V270.8M161.3 254.2V265.6M164.5 261.9V270.8M174.9 261.9V273.4M177.3 256.8V283.7M178.9 272.3V278.5M179.7 274.9V291.4M185.3 261.9V273.4M189.3 269.7V276.0M192.5 264.5V276.0M194.9 261.9V278.5M195.7 269.7V276.0M198.1 274.9V294.0M203.7 269.7V276.0M206.1 261.9V268.2M208.5 251.6V270.8M210.1 261.9V278.5M210.9 267.1V276.0M211.7 272.3V286.3M212.5 277.4V281.1M214.1 272.3V278.5M214.9 277.4V283.7M218.1 280.0V294.0M220.5 277.4V294.0M221.3 292.9V299.2M224.5 290.3V309.5M231.7 285.2V291.4M232.5 282.6V288.9M234.9 287.8V299.2M238.9 287.8V294.0M239.7 287.8V296.6M242.1 282.6V291.4M250.1 282.6V294.0M251.7 285.2V296.6M252.5 280.0V291.4M254.9 290.3V296.6M259.7 280.0V299.2M269.3 298.1V306.9M271.7 303.2V314.7M274.1 300.7V325.0M277.3 300.7V312.1M279.7 295.5V304.3M282.9 295.5V299.2M284.5 295.5V306.9M285.3 298.1V304.3M290.1 295.5V299.2M297.3 282.6V296.6M298.9 282.6V288.9M300.5 287.8V294.6M302.1 285.2V304.3M303.7 290.3V304.3M306.1 292.9V317.2M306.9 303.2V327.6M312.5 290.3V312.1M313.3 292.9V301.8M319.7 292.9V306.9M322.9 280.0V299.2M323.7 290.3V304.3M325.3 303.2V312.1M330.1 300.7V314.7M332.5 295.5V304.3M338.9 290.3V304.3M339.7 292.9V299.2M344.5 277.4V291.4M345.3 282.6V291.4M346.1 282.6V294.6M346.9 290.3V294.0M347.7 290.3V299.2M348.5 298.1V305.9M353.3 287.8V296.6M354.9 290.3V299.2M357.3 295.5V304.0M359.7 300.7V312.1M362.9 303.2V313.4M365.3 316.1V319.8M371.7 295.5V317.2M373.3 311.0V314.7M374.9 323.9V332.7M375.7 326.4V332.7M377.3 329.0V340.5M379.7 329.0V335.3M386.1 326.4V332.7M387.7 323.9V335.3M389.3 325.4V330.1M393.3 329.0V337.9M402.1 316.1V325.0M413.3 313.6V322.4M417.3 321.3V332.7M419.7 323.9V332.7M421.3 323.9V332.7M423.7 323.9V327.6M424.5 323.9V332.7M426.1 326.4V332.7M429.3 326.4V335.3M434.9 323.9V332.7M437.3 329.0V348.2M440.5 323.9V337.9M442.1 326.4V340.5M443.7 334.8V343.0M446.9 336.8V345.6M448.5 339.4V348.2M450.9 341.9V353.4M457.3 347.1V361.1M460.5 354.8V358.5M463.7 352.2V371.4M464.5 360.0V363.7M466.9 360.0V371.4M470.1 367.7V379.2M474.9 367.7V374.0M479.7 362.6V371.4M482.1 360.0V374.0M486.9 354.8V363.7M489.3 362.6V371.4M495.7 362.6V366.3M500.5 362.6V368.8M510.1 354.8V361.1M514.1 341.9V350.8M517.3 341.9V348.2M520.5 339.4V345.6M524.5 339.4V348.2M529.3 341.9V355.9M534.1 339.4V353.4M536.5 344.5V350.8M544.5 339.4V353.4M558.1 318.7V335.3M568.5 303.2V317.2M570.1 303.2V322.4M577.3 282.6V294.0M578.1 292.9V306.9M578.9 300.7V313.4M579.7 308.4V322.4M586.1 300.7V306.9M592.5 290.3V299.2M593.3 295.5V301.8M595.7 295.5V301.8M596.5 295.5V312.1M598.1 298.1V306.9M598.9 292.9V306.9M603.7 298.1V301.8M611.7 295.5V306.9M617.3 274.9V291.4M619.7 272.3V283.7M622.1 272.3V278.5M623.7 256.8V268.2M626.9 236.2V250.2M627.7 249.1V260.5M628.5 254.2V263.1M629.3 261.9V268.2M632.5 259.4V273.4M634.1 272.3V278.5M634.9 274.9V283.7M641.3 269.7V273.4M642.9 269.7V283.7M644.5 272.3V283.7M650.9 249.1V264.5M662.9 228.4V234.7M664.5 231.0V239.8M667.7 233.6V237.3M670.9 233.6V249.4M674.9 246.5V252.7M675.7 238.7V252.7M677.3 236.2V242.4M679.7 236.2V242.4M681.3 231.0V237.3M682.9 225.8V239.8M688.5 231.0V245.0M690.1 231.0V250.2M696.5 228.4V234.7M697.3 233.6V238.2M698.1 233.6V242.4M699.7 241.3V250.2M700.5 246.5V252.7M701.3 249.1V268.2M702.1 259.4V273.4M706.9 256.8V268.2M710.9 259.4V268.2M714.1 264.5V268.2M714.9 264.5V270.8M715.7 267.1V273.9M718.9 274.9V283.7M720.5 274.9V288.9M726.9 274.9V288.9M730.9 280.0V291.4M732.5 287.8V299.2M734.9 287.8V301.8M736.5 282.6V296.6M742.9 287.8V294.0M745.3 287.8V300.2M748.5 298.1V312.1M758.1 290.3V317.2" stroke="#1b7be0" stroke-width="1.05" fill="none" clip-path="url(#p1)"/>
<path d="M30.1 370.3V397.2M30.9 372.9V389.5M31.7 354.8V374.0M32.5 347.1V363.7M33.3 326.4V374.0M34.9 305.8V332.7M35.7 290.3V312.1M37.3 274.7V291.4M38.9 267.1V278.5M39.7 264.5V268.2M42.9 244.6V265.6M44.5 228.4V242.4M45.3 207.8V229.5M48.5 215.5V234.7M56.5 280.0V283.7M57.3 267.1V304.3M59.7 292.9V306.9M60.5 289.7V299.2M61.3 290.3V296.6M65.3 285.2V296.6M66.9 280.3V294.0M69.3 277.4V299.2M70.9 277.4V291.4M71.7 264.5V283.7M72.5 272.3V281.1M74.1 272.3V283.7M78.1 280.0V296.6M79.7 280.0V304.3M86.1 289.7V306.9M87.7 295.5V312.1M90.1 305.8V332.7M90.9 303.2V314.7M91.7 292.9V306.9M94.1 280.0V296.6M95.7 277.4V286.3M100.5 272.3V288.9M101.3 274.7V283.7M114.9 272.3V286.3M115.7 269.7V283.7M116.5 272.3V276.0M119.7 274.9V281.1M120.5 267.1V276.0M126.1 277.4V294.0M130.1 277.4V283.7M133.3 274.9V281.1M138.1 259.4V278.5M139.7 259.4V276.0M145.3 256.8V265.6M166.1 267.1V270.8M166.9 264.5V276.0M170.1 272.3V278.5M170.9 269.7V286.3M174.1 261.9V270.8M178.1 272.3V283.7M180.5 267.1V281.1M182.1 269.7V278.5M182.9 267.1V278.5M184.5 267.1V276.0M186.1 264.5V276.0M188.5 267.1V278.5M191.7 264.5V278.5M199.7 272.3V283.7M202.1 267.1V276.0M204.5 264.5V276.0M206.9 261.9V268.2M213.3 272.3V283.7M218.9 280.0V291.4M222.1 290.3V301.8M222.9 290.3V296.6M225.3 290.3V304.3M226.1 290.3V296.6M227.7 285.2V306.9M228.5 285.2V291.4M229.3 277.4V291.4M230.1 285.2V288.9M230.9 285.2V294.0M233.3 285.2V291.4M234.1 287.8V299.2M236.5 290.3V299.2M238.1 287.8V291.4M240.5 287.8V294.0M248.5 287.8V291.4M250.9 285.2V296.6M257.3 287.8V294.0M261.3 292.9V304.3M262.1 292.9V299.2M263.7 298.1V304.3M266.1 295.5V301.8M270.1 300.7V309.5M270.9 300.7V312.1M275.7 308.4V319.8M282.1 295.5V304.3M283.7 295.5V300.2M286.1 290.3V306.9M286.9 295.5V304.3M293.3 292.9V299.2M304.5 292.9V304.3M305.3 295.5V306.9M308.5 305.8V319.8M309.3 298.1V309.5M311.7 298.1V306.9M314.9 290.3V299.2M317.3 287.8V301.8M320.5 292.9V306.9M322.1 292.9V309.5M334.9 290.3V306.9M335.7 292.9V296.6M337.3 292.9V309.5M341.3 282.6V296.6M342.9 274.9V288.9M343.7 274.9V281.1M350.9 292.9V301.8M351.7 287.8V296.6M363.7 305.8V317.2M364.5 316.1V319.8M368.5 310.4V325.0M369.3 311.0V319.8M370.9 308.4V314.7M374.1 311.0V325.0M381.3 326.4V332.7M382.1 323.9V330.1M383.7 326.4V330.1M385.3 318.7V332.7M394.1 331.6V337.9M398.1 329.0V340.5M399.7 323.9V335.3M401.3 318.7V325.0M403.7 308.4V325.0M406.1 313.6V319.8M410.1 311.0V317.2M416.5 313.6V327.6M418.1 323.9V330.3M422.1 321.3V327.6M425.3 326.4V332.7M430.1 326.4V332.7M458.9 349.7V363.7M459.7 352.2V358.5M467.7 362.6V374.0M470.9 367.7V381.7M473.3 365.2V371.4M476.5 365.2V374.0M477.3 362.6V371.4M478.9 365.2V371.4M482.9 360.0V363.7M484.5 357.4V361.1M485.3 352.2V358.5M487.7 360.0V374.0M488.5 362.6V371.4M490.1 362.6V371.4M490.9 360.0V368.8M497.3 362.6V368.8M498.9 360.0V371.4M504.5 365.2V368.8M508.5 360.0V368.8M510.9 352.2V361.1M512.5 347.1V355.9M516.5 339.4V355.9M518.1 334.2V348.2M533.3 341.9V348.2M535.7 344.5V350.8M538.1 347.1V353.4M542.1 344.5V348.2M546.9 349.7V358.5M549.3 349.7V361.1M550.9 341.9V353.4M553.3 339.4V353.4M554.1 334.2V343.0M555.7 329.0V340.5M559.7 311.0V325.0M562.1 313.6V319.8M562.9 308.4V314.7M565.3 305.8V312.1M567.7 305.8V312.1M570.9 295.4V306.9M572.5 285.2V301.8M574.1 285.2V294.0M575.7 285.2V291.4M580.5 308.4V317.2M582.9 295.5V312.1M583.7 298.1V309.5M589.3 298.1V304.3M597.3 295.5V312.1M600.5 303.2V312.1M602.9 298.1V304.3M606.1 298.1V306.9M610.9 298.1V306.9M612.5 298.1V301.8M614.1 290.3V304.3M614.9 280.0V296.6M616.5 274.9V286.3M618.1 274.9V283.7M620.5 277.4V281.4M622.9 256.8V273.4M624.5 254.2V263.1M625.3 246.5V257.9M626.1 238.7V255.3M637.3 267.1V283.7M645.3 269.0V278.5M646.1 261.9V273.4M647.7 259.4V268.2M648.5 255.9V260.5M653.3 259.4V268.2M655.7 261.9V270.8M656.5 255.9V263.1M657.3 251.6V265.6M658.1 243.9V255.3M658.9 238.7V247.6M659.7 236.2V245.0M661.3 228.4V245.0M666.1 236.2V239.8M668.5 228.4V239.8M669.3 231.0V242.4M672.5 246.5V255.3M674.1 249.1V257.9M676.5 238.7V247.6M678.9 233.6V247.6M680.5 233.6V239.8M683.7 233.6V239.8M686.1 223.2V237.3M686.9 225.8V237.3M689.3 238.7V247.6M690.9 236.2V247.6M692.5 241.3V250.2M693.3 233.6V250.2M694.1 228.4V239.8M698.9 238.7V252.7M704.5 264.5V273.4M712.5 261.9V268.2M722.9 282.6V286.3M730.1 282.6V291.4M734.1 290.3V299.2M735.7 282.6V296.6M737.3 287.8V294.0M746.1 290.3V306.9M753.3 303.2V312.1M754.1 295.5V306.9M757.3 290.3V300.2" stroke="#ee0a0a" stroke-width="1.05" fill="none" clip-path="url(#p1)"/>
<path d="M47.7 233.6V234.7M55.7 280.0V283.3M62.9 285.2V291.4M63.7 290.3V294.6M67.7 274.9V286.3M70.1 287.8V290.8M73.3 274.9V276.0M77.3 292.9V294.0M80.5 280.3V286.3M84.5 300.7V301.8M85.3 300.7V301.8M89.3 323.9V330.1M92.5 289.7V296.6M94.9 285.2V286.3M97.3 282.6V288.9M99.7 287.8V288.9M102.9 277.4V278.5M103.7 277.4V278.5M106.1 285.2V288.9M107.7 292.9V294.0M108.5 292.9V294.0M110.1 289.7V294.0M111.7 292.9V294.0M113.3 292.9V294.0M121.3 269.0V276.0M122.1 272.3V273.4M125.3 280.0V281.1M126.9 282.6V285.2M127.7 282.6V283.7M128.5 282.6V283.7M129.3 282.6V283.7M130.9 277.4V283.7M131.7 274.9V281.1M132.5 276.5V278.5M134.1 274.9V276.0M135.7 274.9V279.5M136.5 274.9V276.0M137.3 274.9V276.0M140.5 267.1V270.8M142.1 267.1V268.2M143.7 254.2V270.8M144.5 259.6V263.1M146.1 256.8V257.9M149.3 243.9V245.0M150.9 243.9V245.0M151.7 243.9V245.0M153.3 241.3V247.6M154.9 246.5V252.7M155.7 249.1V253.2M157.3 251.6V252.7M159.7 251.6V257.9M162.1 264.5V270.8M162.9 267.1V268.2M165.3 269.0V270.8M168.5 272.3V273.4M169.3 269.7V273.4M171.7 269.7V270.8M172.5 269.7V270.8M173.3 269.0V270.8M175.7 272.3V276.0M181.3 272.3V273.4M183.7 272.3V273.4M186.9 274.9V276.0M187.7 269.7V276.0M190.9 274.9V276.0M197.3 274.9V276.0M198.9 278.4V281.1M200.5 274.9V276.0M201.3 274.9V278.5M205.3 264.5V265.6M207.7 264.5V265.6M209.3 267.1V270.8M215.7 280.0V281.1M216.5 280.0V281.1M217.3 280.0V281.1M219.7 285.2V294.0M223.7 292.9V301.8M226.9 289.7V291.4M235.7 295.5V296.6M237.3 290.3V291.4M241.3 287.8V288.9M243.7 285.2V291.4M244.5 290.3V291.4M245.3 290.3V291.4M246.9 287.8V291.4M253.3 285.2V291.4M264.5 300.7V301.8M266.9 298.1V299.2M267.7 298.1V299.2M272.5 311.0V314.7M273.3 311.0V312.1M274.9 308.4V312.1M278.1 303.2V304.3M280.5 298.1V302.1M288.5 298.1V299.2M289.3 298.1V299.2M290.9 295.5V296.6M291.7 295.4V296.6M294.1 292.9V294.0M294.9 292.9V294.6M298.1 285.2V287.0M299.7 285.2V294.0M302.9 298.1V299.2M307.7 311.0V312.1M310.9 300.7V301.8M316.5 292.9V294.0M318.1 291.6V296.6M321.3 303.2V304.3M327.7 305.8V309.6M329.3 305.8V306.9M330.9 297.2V301.8M331.7 298.1V304.3M336.5 292.9V294.0M338.1 298.1V306.9M349.3 300.7V301.8M350.1 300.7V301.8M354.1 290.3V294.0M355.7 298.1V299.2M356.5 298.1V299.2M358.1 300.7V301.8M360.5 304.8V306.9M362.1 305.8V306.9M366.1 316.1V320.9M366.9 313.6V317.2M367.7 316.1V317.2M372.5 311.0V313.4M376.5 329.0V330.1M378.9 334.2V335.3M380.5 331.6V332.7M388.5 326.4V327.6M390.1 329.0V330.1M390.9 329.0V330.1M391.7 326.4V330.1M395.7 331.6V332.7M396.5 331.6V332.7M400.5 319.8V325.0M405.3 313.6V314.7M407.7 316.1V317.2M408.5 316.1V319.0M410.9 313.6V317.2M414.9 318.7V319.8M415.7 318.7V320.9M420.5 329.0V330.1M427.7 329.0V330.1M430.9 326.4V327.6M432.5 326.4V327.6M433.3 326.4V327.6M439.7 331.1V335.3M449.3 344.5V345.6M450.1 341.9V348.2M451.7 349.7V350.8M452.5 349.7V353.4M453.3 349.7V350.8M454.1 349.7V350.8M454.9 349.7V351.0M455.7 349.7V353.4M466.1 362.6V366.0M468.5 372.9V374.0M469.3 372.9V377.3M471.7 370.3V371.4M474.1 362.6V368.8M480.5 365.2V366.3M486.1 354.8V355.9M494.1 360.0V366.0M494.9 362.6V363.7M498.1 367.7V368.8M501.3 367.7V368.8M502.9 367.7V368.8M509.3 360.0V361.1M511.7 351.8V355.9M513.3 347.1V348.2M519.7 339.4V340.5M523.7 341.9V343.0M526.1 344.5V345.6M526.9 344.5V347.2M527.7 344.5V345.6M528.5 341.9V348.2M537.3 349.7V350.8M538.9 344.5V348.2M539.7 347.1V348.2M547.7 354.8V355.9M548.5 354.8V358.5M551.7 344.5V345.6M552.5 344.5V345.6M556.5 325.4V330.1M558.9 318.7V322.4M561.3 316.1V317.2M563.7 308.4V309.5M574.9 287.8V288.9M576.5 280.3V288.9M582.1 311.0V312.1M584.5 300.7V301.8M585.3 300.7V301.8M586.9 303.2V305.9M587.7 303.2V304.3M588.5 303.2V304.3M591.7 298.1V299.2M594.9 300.7V302.1M601.3 300.7V304.3M604.5 298.1V301.8M605.3 300.7V301.8M606.9 300.7V304.3M608.5 300.7V301.8M609.3 300.7V301.8M613.3 298.1V299.2M615.7 285.2V286.3M618.9 277.4V278.5M621.3 277.4V278.5M630.1 264.5V265.6M630.9 264.5V268.2M635.7 280.0V281.1M638.1 269.7V270.8M638.9 267.1V270.8M642.1 272.3V273.4M646.9 264.5V265.6M649.3 256.8V257.9M654.9 264.5V265.6M660.5 236.2V237.3M662.1 231.0V232.1M663.7 233.6V234.7M665.3 237.1V239.8M666.9 236.2V237.3M673.3 254.2V255.3M678.1 238.7V239.8M682.1 228.4V237.3M684.5 233.6V234.7M685.3 233.6V234.7M691.7 241.3V245.7M694.9 231.0V237.3M708.5 259.4V260.5M716.5 272.3V276.0M717.3 274.9V276.0M719.7 280.0V281.1M722.1 284.1V286.3M723.7 277.4V283.7M725.3 272.8V278.5M726.1 277.4V281.1M728.5 285.2V286.3M729.3 285.2V286.3M738.1 290.3V291.4M738.9 290.3V291.4M739.7 287.8V291.4M742.1 290.3V292.7M744.5 292.9V294.0M746.9 303.2V304.3M747.7 295.5V304.3M749.3 305.8V312.1M750.1 308.4V312.1M751.7 308.4V309.5M755.7 300.7V301.8M756.5 295.5V301.8" stroke="#e6d860" stroke-width="1.05" fill="none" clip-path="url(#p1)"/>
<path d="M4.0 204.0H1016.2" stroke="#c2c2c2" stroke-width="2.0"/>
<path d="M5.3 402.0H970.1" stroke="#9c9c9c" stroke-width="1.5"/>
<path d="M969.5 205.0V402.5" stroke="#d8d8d8" stroke-width="1.1"/>
<text transform="translate(5.60 214.70)" x="4.84 14.52" y="0" font-size="9.7" fill="#b2b2b2" class="w">時刻</text>
<text transform="translate(5.60 215.00) scale(0.80 1)" x="27.23 33.27 39.32 45.37 51.42 57.48" y="0" font-size="10.6" fill="#b2b2b2" class="n">:06:00</text>
<text transform="translate(5.60 214.70)" x="58.08 67.76" y="0" font-size="9.7" fill="#b2b2b2" class="w">始値</text>
<text transform="translate(5.60 215.00) scale(0.80 1)" x="93.78 99.83 105.88 111.93 117.98 124.03" y="0" font-size="10.6" fill="#b2b2b2" class="n">:3,860</text>
<text transform="translate(5.60 214.70)" x="111.32 121.00" y="0" font-size="9.7" fill="#b2b2b2" class="w">高値</text>
<text transform="translate(5.60 215.00) scale(0.80 1)" x="160.33 166.38 172.43 178.48 184.53 190.58" y="0" font-size="10.6" fill="#b2b2b2" class="n">:3,860</text>
<text transform="translate(5.60 214.70)" x="164.56 174.24" y="0" font-size="9.7" fill="#b2b2b2" class="w">安値</text>
<text transform="translate(5.60 215.00) scale(0.80 1)" x="226.88 232.93 238.98 245.03 251.08 257.13" y="0" font-size="10.6" fill="#b2b2b2" class="n">:3,860</text>
<text transform="translate(5.60 214.70)" x="217.80 227.48" y="0" font-size="9.7" fill="#b2b2b2" class="w">終値</text>
<text transform="translate(5.60 215.00) scale(0.80 1)" x="293.43 299.48 305.53 311.58 317.63 323.68" y="0" font-size="10.6" fill="#b2b2b2" class="n">:3,860</text>
<g clip-path="url(#c2)"><text transform="translate(970.70 209.30) scale(0.80 1)" x="3.02 9.07 15.12 21.17 27.23" y="0" font-size="10.6" fill="#b2b2b2" class="n">3,900</text></g>
<text transform="translate(970.70 235.10) scale(0.80 1)" x="3.02 9.07 15.12 21.17 27.23" y="0" font-size="10.6" fill="#b2b2b2" class="n">3,890</text>
<text transform="translate(970.70 261.00) scale(0.80 1)" x="3.02 9.07 15.12 21.17 27.23" y="0" font-size="10.6" fill="#b2b2b2" class="n">3,880</text>
<text transform="translate(970.70 286.60) scale(0.80 1)" x="3.02 9.07 15.12 21.17 27.23" y="0" font-size="10.6" fill="#b2b2b2" class="n">3,870</text>
<text transform="translate(970.70 338.10) scale(0.80 1)" x="3.02 9.07 15.12 21.17 27.23" y="0" font-size="10.6" fill="#b2b2b2" class="n">3,850</text>
<text transform="translate(970.70 363.70) scale(0.80 1)" x="3.02 9.07 15.12 21.17 27.23" y="0" font-size="10.6" fill="#b2b2b2" class="n">3,840</text>
<text transform="translate(970.70 389.40) scale(0.80 1)" x="3.02 9.07 15.12 21.17 27.23" y="0" font-size="10.6" fill="#b2b2b2" class="n">3,830</text>
<rect x="970" y="306.1" width="46" height="16.2" fill="#d2d2d2"/>
<text transform="translate(980.40 316.80) scale(0.80 1)" x="3.02 9.07 15.12 21.17 27.23" y="0" font-size="10.6" fill="#000" font-weight="bold" class="n">3,860</text>
<text transform="translate(16.20 409.70) scale(0.80 1)" x="3.02 9.07" y="0" font-size="10.6" fill="#f0f0f0" font-weight="bold" class="n">06</text>
<text transform="translate(41.90 409.70) scale(0.80 1)" x="3.02 9.07" y="0" font-size="10.6" fill="#b2b2b2" class="n">09</text>
<text transform="translate(89.90 409.70) scale(0.80 1)" x="3.02 9.07" y="0" font-size="10.6" fill="#b2b2b2" class="n">10</text>
<text transform="translate(138.30 409.70) scale(0.80 1)" x="3.02 9.07" y="0" font-size="10.6" fill="#b2b2b2" class="n">11</text>
<text transform="translate(186.15 409.70) scale(0.80 1)" x="3.02 9.07" y="0" font-size="10.6" fill="#b2b2b2" class="n">12</text>
<text transform="translate(234.30 409.70) scale(0.80 1)" x="3.02 9.07" y="0" font-size="10.6" fill="#b2b2b2" class="n">13</text>
<text transform="translate(282.30 409.70) scale(0.80 1)" x="3.02 9.07" y="0" font-size="10.6" fill="#b2b2b2" class="n">14</text>
<text transform="translate(317.60 409.70) scale(0.80 1)" x="3.02 9.07" y="0" font-size="10.6" fill="#b2b2b2" class="n">15</text>
<text transform="translate(339.65 409.70) scale(0.80 1)" x="3.02 9.07" y="0" font-size="10.6" fill="#b2b2b2" class="n">16</text>
<text transform="translate(363.40 409.70) scale(0.80 1)" x="3.02 9.07" y="0" font-size="10.6" fill="#b2b2b2" class="n">17</text>
<text transform="translate(412.15 409.70) scale(0.80 1)" x="3.02 9.07" y="0" font-size="10.6" fill="#b2b2b2" class="n">18</text>
<text transform="translate(459.00 409.70) scale(0.80 1)" x="3.02 9.07" y="0" font-size="10.6" fill="#b2b2b2" class="n">19</text>
<text transform="translate(505.30 409.70) scale(0.80 1)" x="3.02 9.07" y="0" font-size="10.6" fill="#b2b2b2" class="n">20</text>
<text transform="translate(551.90 409.70) scale(0.80 1)" x="3.02 9.07" y="0" font-size="10.6" fill="#b2b2b2" class="n">21</text>
<text transform="translate(599.40 409.70) scale(0.80 1)" x="3.02 9.07" y="0" font-size="10.6" fill="#b2b2b2" class="n">22</text>
<text transform="translate(648.00 409.70) scale(0.80 1)" x="3.02 9.07" y="0" font-size="10.6" fill="#b2b2b2" class="n">23</text>
<text transform="translate(695.90 409.70) scale(0.80 1)" x="3.02 9.07" y="0" font-size="10.6" fill="#b2b2b2" class="n">00</text>
<text transform="translate(743.65 409.70) scale(0.80 1)" x="3.02 9.07" y="0" font-size="10.6" fill="#b2b2b2" class="n">01</text>
<text transform="translate(791.00 409.70) scale(0.80 1)" x="3.02 9.07" y="0" font-size="10.6" fill="#b2b2b2" class="n">02</text>
<text transform="translate(838.65 409.70) scale(0.80 1)" x="3.02 9.07" y="0" font-size="10.6" fill="#b2b2b2" class="n">03</text>
<text transform="translate(885.15 409.70) scale(0.80 1)" x="3.02 9.07" y="0" font-size="10.6" fill="#b2b2b2" class="n">04</text>
<text transform="translate(931.30 409.70) scale(0.80 1)" x="3.02 9.07" y="0" font-size="10.6" fill="#b2b2b2" class="n">05</text>
<text transform="translate(953.60 409.70) scale(0.80 1)" x="3.02 9.07" y="0" font-size="10.6" fill="#b2b2b2" class="n">06</text>
<text transform="translate(30.20 398.40) scale(0.80 1)" x="3.02 9.07" y="0" font-size="10.6" fill="#b2b2b2" class="n">26</text>
<text transform="translate(696.40 398.40) scale(0.80 1)" x="3.02 9.07" y="0" font-size="10.6" fill="#b2b2b2" class="n">27</text>
<rect x="4" y="414.0" width="1012.2" height="3.2" fill="#f5f5f5"/>
<rect x="5" y="418.0" width="1011.2" height="122.0" fill="#1a1a1a"/>
<rect x="5.8" y="419.0" width="963.7" height="109.0" fill="#000"/>
<path d="M5.8 446.5H969.5M5.8 473.6H969.5M5.8 500.5H969.5M29.0 419.0V528.0M41.0 419.0V528.0M89.0 419.0V528.0M137.4 419.0V528.0M185.2 419.0V528.0M233.4 419.0V528.0M281.4 419.0V528.0M328.9 419.0V528.0M338.8 419.0V528.0M362.5 419.0V528.0M411.2 419.0V528.0M458.1 419.0V528.0M504.4 419.0V528.0M551.0 419.0V528.0M598.5 419.0V528.0M647.1 419.0V528.0M695.0 419.0V528.0M742.8 419.0V528.0M790.1 419.0V528.0M837.8 419.0V528.0M884.2 419.0V528.0M930.4 419.0V528.0M965.4 419.0V528.0" stroke="#444444" stroke-width="1.1" fill="none"/>
<path d="M5.8 446.5H969.5M5.8 473.6H969.5M5.8 500.5H969.5M29.0 419.0V528.0M41.0 419.0V528.0M89.0 419.0V528.0M137.4 419.0V528.0M185.2 419.0V528.0M233.4 419.0V528.0M281.4 419.0V528.0M328.9 419.0V528.0M338.8 419.0V528.0M362.5 419.0V528.0M411.2 419.0V528.0M458.1 419.0V528.0M504.4 419.0V528.0M551.0 419.0V528.0M598.5 419.0V528.0M647.1 419.0V528.0M695.0 419.0V528.0M742.8 419.0V528.0M790.1 419.0V528.0M837.8 419.0V528.0M884.2 419.0V528.0M930.4 419.0V528.0M965.4 419.0V528.0" stroke="#6e6e6e" stroke-width="1" stroke-dasharray="1.45 1.45" fill="none"/>
<path d="M6.6 450.1L7.4 452.9L8.2 454.6L9.0 454.0L9.8 454.2L10.6 455.5L11.4 455.9L12.2 456.3L13.0 453.5L13.8 453.0L14.6 454.6L15.4 453.8L16.2 454.4L17.0 453.1L17.8 451.1L18.6 450.1L19.4 453.3L20.2 453.2L21.0 452.0L21.8 448.3L22.6 446.5L23.4 445.8L24.2 444.4L25.0 444.1L25.8 444.7L26.6 445.4L27.4 446.0L28.2 445.1L29.0 442.9L29.8 459.6L30.6 446.8L31.4 446.7L32.2 448.8L33.0 463.7L33.8 470.0L34.6 476.7L35.4 482.9L36.2 480.9L37.0 483.6L37.8 483.7L38.6 487.5L39.4 489.1L40.2 484.2L41.0 486.5L41.8 490.9L42.6 493.9L43.4 498.1L44.2 499.4L45.0 509.0L45.8 503.0L46.6 500.0L47.4 497.2L48.2 496.3L49.0 492.5L49.8 492.9L50.6 490.2L51.4 490.4L52.2 489.0L53.0 487.8L53.8 486.0L54.6 486.5L55.4 485.0L56.2 485.1L57.0 482.6L57.8 483.6L58.6 483.6L59.4 483.0L60.2 482.1L61.0 481.3L61.8 479.7L62.6 479.0L63.4 479.5L64.2 480.4L65.0 481.6L65.8 481.9L66.6 482.7L67.4 483.2L68.2 483.7L69.0 482.9L69.8 483.3L70.6 485.0L71.4 485.0L72.2 486.8L73.0 488.5L73.8 484.6L74.6 484.5L75.4 485.7L76.2 484.9L77.0 492.4L77.8 495.7L78.6 496.2L79.4 496.2L80.2 494.8L81.0 492.3L81.8 491.7L82.6 490.7L83.4 491.2L84.2 491.5L85.0 491.2L85.8 490.0L86.6 484.0L87.4 492.8L88.2 504.6L89.0 513.1L89.8 506.6L90.6 483.3L91.4 492.1L92.2 487.4L93.0 482.4L93.8 483.3L94.6 485.7L95.4 478.3L96.2 471.2L97.0 471.1L97.8 489.4L98.6 497.0L99.4 491.6L100.2 481.0L101.0 481.6L101.8 481.3L102.6 482.8L103.4 481.0L104.2 481.5L105.0 484.0L105.8 483.1L106.6 485.7L107.4 483.4L108.2 484.1L109.0 484.4L109.8 484.2L110.6 482.4L111.4 481.9L112.2 479.8L113.0 481.4L113.8 481.1L114.6 479.6L115.4 479.2L116.2 476.8L117.0 480.1L117.8 481.5L118.6 482.3L119.4 483.3L120.2 484.2L121.0 485.2L121.8 484.4L122.6 485.3L123.4 483.9L124.2 486.9L125.0 486.4L125.8 484.8L126.6 485.1L127.4 485.0L128.2 487.3L129.0 488.7L129.8 492.1L130.6 491.3L131.4 489.7L132.2 486.8L133.0 490.1L133.8 488.0L134.6 485.8L135.4 487.4L136.2 485.3L137.0 491.5L137.8 489.5L138.6 489.5L139.4 490.2L140.2 489.7L141.0 493.6L141.8 493.4L142.6 496.8L143.4 494.8L144.2 496.8L145.0 498.7L145.8 498.7L146.6 495.0L147.4 495.5L148.2 499.1L149.0 500.1L149.8 498.6L150.6 499.1L151.4 499.3L152.2 498.8L153.0 498.7L153.8 500.1L154.6 498.8L155.4 498.8L156.2 495.0L157.0 493.4L157.8 491.6L158.6 492.0L159.4 490.2L160.2 489.2L161.0 491.4L161.8 491.8L162.6 490.6L163.4 490.6L164.2 488.9L165.0 487.4L165.8 487.8L166.6 486.8L167.4 485.4L168.2 484.3L169.0 484.0L169.8 485.2L170.6 484.8L171.4 484.4L172.2 486.8L173.0 485.8L173.8 485.8L174.6 485.7L175.4 482.6L176.2 481.0L177.0 484.5L177.8 483.4L178.6 486.1L179.4 484.3L180.2 484.4L181.0 483.4L181.8 479.8L182.6 482.6L183.4 480.8L184.2 480.3L185.0 480.2L185.8 481.0L186.6 480.6L187.4 480.3L188.2 476.8L189.0 477.5L189.8 475.8L190.6 478.8L191.4 480.1L192.2 478.8L193.0 479.7L193.8 479.5L194.6 480.1L195.4 477.8L196.2 477.5L197.0 477.2L197.8 480.3L198.6 480.1L199.4 479.3L200.2 479.7L201.0 479.1L201.8 478.7L202.6 477.8L203.4 478.0L204.2 477.3L205.0 478.3L205.8 480.2L206.6 478.1L207.4 476.8L208.2 477.1L209.0 479.4L209.8 481.7L210.6 477.9L211.4 476.2L212.2 474.4L213.0 472.1L213.8 470.9L214.6 470.8L215.4 471.5L216.2 474.5L217.0 471.0L217.8 473.1L218.6 472.5L219.4 472.6L220.2 473.8L221.0 475.5L221.8 474.8L222.6 475.3L223.4 475.5L224.2 476.7L225.0 477.7L225.8 475.9L226.6 474.7L227.4 475.0L228.2 476.8L229.0 478.1L229.8 480.4L230.6 479.1L231.4 477.9L232.2 480.3L233.0 478.9L233.8 481.5L234.6 482.1L235.4 479.0L236.2 478.5L237.0 478.7L237.8 480.5L238.6 480.7L239.4 477.7L240.2 480.3L241.0 478.9L241.8 479.1L242.6 479.0L243.4 479.1L244.2 477.2L245.0 477.9L245.8 476.3L246.6 476.9L247.4 477.4L248.2 476.8L249.0 472.1L249.8 469.3L250.6 469.8L251.4 468.8L252.2 471.6L253.0 469.7L253.8 467.9L254.6 469.5L255.4 468.7L256.2 466.6L257.0 468.3L257.8 469.2L258.6 469.8L259.4 470.2L260.2 469.8L261.0 470.6L261.8 469.3L262.6 468.6L263.4 470.8L264.2 470.0L265.0 470.8L265.8 469.3L266.6 471.1L267.4 471.8L268.2 469.2L269.0 471.7L269.8 470.6L270.6 472.1L271.4 472.1L272.2 472.4L273.0 473.2L273.8 471.1L274.6 473.9L275.4 472.8L276.2 474.1L277.0 477.2L277.8 475.8L278.6 477.0L279.4 479.0L280.2 480.0L281.0 477.4L281.8 480.6L282.6 481.5L283.4 479.0L284.2 475.8L285.0 473.9L285.8 473.8L286.6 472.3L287.4 472.8L288.2 473.3L289.0 473.8L289.8 475.8L290.6 474.2L291.4 472.3L292.2 474.6L293.0 471.9L293.8 472.8L294.6 473.3L295.4 473.3L296.2 473.2L297.0 474.6L297.8 477.9L298.6 474.8L299.4 475.1L300.2 476.1L301.0 475.6L301.8 475.9L302.6 476.3L303.4 473.5L304.2 475.1L305.0 476.6L305.8 477.4L306.6 478.6L307.4 478.0L308.2 477.6L309.0 477.9L309.8 477.1L310.6 477.1L311.4 477.1L312.2 475.5L313.0 474.5L313.8 473.9L314.6 475.7L315.4 475.6L316.2 475.0L317.0 476.8L317.8 482.4L318.6 485.9L319.4 490.5L320.2 490.2L321.0 491.1L321.8 488.1L322.6 487.3L323.4 484.3L324.2 483.3L325.0 482.4L325.8 482.8L326.6 480.5L327.4 480.8L328.2 485.4L329.0 485.9L329.8 487.6L330.6 485.1L331.4 485.2L332.2 486.7L333.0 489.5L333.8 485.3L334.6 482.0L335.4 484.6L336.2 482.4L337.0 484.8L337.8 480.8L338.6 478.3L339.4 459.6L340.2 444.2L341.0 445.7L341.8 449.1L342.6 451.9L343.4 449.6L344.2 449.6L345.0 448.8L345.8 448.4L346.6 450.8L347.4 452.1L348.2 453.0L349.0 453.6L349.8 453.3L350.6 456.1L351.4 456.1L352.2 454.6L353.0 455.7L353.8 453.8L354.6 454.7L355.4 454.1L356.2 453.6L357.0 452.8L357.8 452.4L358.6 450.8L359.4 451.2L360.2 451.5L361.0 452.7L361.8 454.2L362.6 455.1L363.4 454.8L364.2 449.4L365.0 451.6L365.8 450.6L366.6 453.4L367.4 455.8L368.2 457.1L369.0 459.4L369.8 457.4L370.6 457.7L371.4 454.2L372.2 453.5L373.0 451.8L373.8 450.3L374.6 448.5L375.4 447.0L376.2 448.9L377.0 449.1L377.8 447.4L378.6 445.8L379.4 446.3L380.2 445.8L381.0 444.1L381.8 443.2L382.6 443.6L383.4 440.4L384.2 440.1L385.0 438.1L385.8 439.9L386.6 440.7L387.4 441.3L388.2 441.2L389.0 442.6L389.8 439.7L390.6 439.3L391.4 442.2L392.2 440.7L393.0 439.9L393.8 441.6L394.6 440.0L395.4 442.2L396.2 439.9L397.0 441.3L397.8 441.1L398.6 443.3L399.4 442.5L400.2 443.6L401.0 443.4L401.8 442.5L402.6 443.3L403.4 442.6L404.2 441.1L405.0 439.4L405.8 438.6L406.6 439.3L407.4 441.0L408.2 438.0L409.0 437.5L409.8 437.8L410.6 437.8L411.4 438.2L412.2 439.1L413.0 440.9L413.8 439.7L414.6 439.1L415.4 437.6L416.2 438.8L417.0 438.1L417.8 436.7L418.6 436.5L419.4 437.2L420.2 437.8L421.0 437.1L421.8 436.3L422.6 435.7L423.4 436.8L424.2 436.8L425.0 439.1L425.8 435.3L426.6 435.3L427.4 436.2L428.2 434.3L429.0 435.5L429.8 434.4L430.6 436.2L431.4 437.3L432.2 437.8L433.0 436.9L433.8 438.6L434.6 435.9L435.4 434.9L436.2 434.6L437.0 433.5L437.8 433.8L438.6 433.3L439.4 434.0L440.2 435.8L441.0 434.0L441.8 432.6L442.6 433.1L443.4 432.3L444.2 432.9L445.0 431.1L445.8 430.2L446.6 430.2L447.4 431.3L448.2 429.2L449.0 429.8L449.8 430.1L450.6 430.7L451.4 431.3L452.2 431.5L453.0 428.4L453.8 431.4L454.6 430.6L455.4 430.8L456.2 433.7L457.0 430.6L457.8 431.9L458.6 430.3L459.4 428.0L460.2 429.1L461.0 429.1L461.8 428.3L462.6 426.5L463.4 428.6L464.2 429.0L465.0 427.8L465.8 430.3L466.6 428.0L467.4 429.6L468.2 431.7L469.0 434.7L469.8 440.7L470.6 443.4L471.4 443.9L472.2 442.9L473.0 441.4L473.8 438.3L474.6 440.1L475.4 439.4L476.2 440.4L477.0 437.9L477.8 436.9L478.6 436.2L479.4 434.4L480.2 437.6L481.0 434.9L481.8 434.6L482.6 433.7L483.4 435.6L484.2 435.4L485.0 434.9L485.8 433.9L486.6 435.4L487.4 435.5L488.2 433.4L489.0 431.8L489.8 431.0L490.6 430.8L491.4 431.0L492.2 429.9L493.0 430.3L493.8 432.7L494.6 431.6L495.4 428.7L496.2 429.8L497.0 429.4L497.8 428.9L498.6 429.7L499.4 428.1L500.2 427.7L501.0 427.2L501.8 426.9L502.6 427.8L503.4 427.1L504.2 424.9L505.0 425.5L505.8 425.3L506.6 427.0L507.4 426.7L508.2 427.1L509.0 425.6L509.8 423.1L510.6 426.2L511.4 427.0L512.2 428.3L513.0 427.4L513.8 429.4L514.6 429.4L515.4 430.7L516.2 434.8L517.0 437.9L517.8 437.1L518.6 436.0L519.4 435.0L520.2 436.5L521.0 438.0L521.8 436.6L522.6 434.3L523.4 435.1L524.2 435.8L525.0 436.5L525.8 435.6L526.6 434.3L527.4 433.6L528.2 432.1L529.0 432.5L529.8 432.4L530.6 431.7L531.4 432.2L532.2 431.5L533.0 431.9L533.8 432.3L534.6 430.9L535.4 429.9L536.2 429.2L537.0 428.4L537.8 430.1L538.6 431.2L539.4 430.6L540.2 433.5L541.0 432.8L541.8 434.0L542.6 433.8L543.4 433.5L544.2 436.5L545.0 433.0L545.8 434.4L546.6 432.6L547.4 433.2L548.2 432.0L549.0 432.2L549.8 433.1L550.6 433.8L551.4 430.8L552.2 431.3L553.0 431.8L553.8 430.2L554.6 433.2L555.4 433.5L556.2 436.1L557.0 436.9L557.8 438.7L558.6 438.9L559.4 438.4L560.2 441.1L561.0 440.5L561.8 445.6L562.6 449.6L563.4 450.7L564.2 450.3L565.0 452.5L565.8 448.2L566.6 443.5L567.4 441.8L568.2 441.4L569.0 444.8L569.8 450.4L570.6 452.4L571.4 453.5L572.2 456.9L573.0 460.0L573.8 461.3L574.6 459.6L575.4 456.4L576.2 458.5L577.0 457.0L577.8 456.3L578.6 455.6L579.4 452.9L580.2 451.8L581.0 451.7L581.8 452.5L582.6 448.8L583.4 449.7L584.2 448.7L585.0 449.4L585.8 449.8L586.6 448.2L587.4 448.0L588.2 449.9L589.0 450.1L589.8 448.5L590.6 450.4L591.4 448.7L592.2 448.7L593.0 445.5L593.8 446.5L594.6 442.8L595.4 443.9L596.2 439.8L597.0 441.7L597.8 439.5L598.6 437.9L599.4 439.8L600.2 441.5L601.0 441.5L601.8 442.6L602.6 443.1L603.4 442.5L604.2 439.6L605.0 442.5L605.8 443.7L606.6 444.0L607.4 444.3L608.2 442.0L609.0 444.3L609.8 441.7L610.6 440.0L611.4 439.4L612.2 438.2L613.0 439.0L613.8 439.9L614.6 443.1L615.4 443.8L616.2 442.8L617.0 444.8L617.8 447.4L618.6 448.0L619.4 449.2L620.2 450.5L621.0 451.1L621.8 453.4L622.6 452.4L623.4 453.1L624.2 454.3L625.0 455.2L625.8 455.7L626.6 456.6L627.4 455.1L628.2 457.0L629.0 456.7L629.8 455.7L630.6 456.9L631.4 458.9L632.2 457.5L633.0 456.1L633.8 453.6L634.6 454.2L635.4 453.2L636.2 452.9L637.0 453.9L637.8 451.2L638.6 449.6L639.4 448.0L640.2 447.4L641.0 448.1L641.8 446.8L642.6 448.6L643.4 443.9L644.2 442.2L645.0 442.6L645.8 441.9L646.6 441.0L647.4 444.2L648.2 445.3L649.0 447.0L649.8 449.2L650.6 449.1L651.4 448.0L652.2 448.7L653.0 448.5L653.8 446.6L654.6 445.2L655.4 446.2L656.2 449.7L657.0 452.3L657.8 452.6L658.6 453.3L659.4 454.0L660.2 452.2L661.0 452.6L661.8 449.6L662.6 451.1L663.4 450.6L664.2 450.0L665.0 449.4L665.8 447.5L666.6 447.1L667.4 447.5L668.2 447.8L669.0 450.6L669.8 449.3L670.6 449.5L671.4 447.6L672.2 448.7L673.0 448.7L673.8 449.7L674.6 449.3L675.4 448.9L676.2 449.9L677.0 451.4L677.8 451.8L678.6 449.8L679.4 450.7L680.2 451.3L681.0 452.4L681.8 452.1L682.6 455.3L683.4 455.4L684.2 458.7L685.0 459.7L685.8 459.0L686.6 455.2L687.4 457.4L688.2 456.4L689.0 453.2L689.8 454.1L690.6 453.7L691.4 454.0L692.2 454.0L693.0 454.5L693.8 456.1L694.6 460.4L695.4 457.6L696.2 455.9L697.0 453.3L697.8 451.9L698.6 450.6L699.4 448.9L700.2 449.6L701.0 447.9L701.8 448.4L702.6 446.3L703.4 449.1L704.2 448.9L705.0 450.4L705.8 450.7L706.6 450.9L707.4 453.9L708.2 451.9L709.0 450.8L709.8 449.1L710.6 451.1L711.4 451.6L712.2 453.2L713.0 453.9L713.8 453.4L714.6 453.2L715.4 455.5L716.2 456.7L717.0 457.2L717.8 456.2L718.6 458.6L719.4 459.2L720.2 459.9L721.0 460.6L721.8 460.4L722.6 461.4L723.4 461.9L724.2 459.9L725.0 458.3L725.8 459.3L726.6 460.8L727.4 460.0L728.2 462.3L729.0 463.5L729.8 462.6L730.6 462.6L731.4 462.2L732.2 466.0L733.0 468.5L733.8 468.0L734.6 468.0L735.4 468.1L736.2 470.5L737.0 469.3L737.8 468.0L738.6 469.4L739.4 469.4L740.2 470.3L741.0 469.0L741.8 471.1L742.6 471.1L743.4 468.6L744.2 469.9L745.0 470.6L745.8 470.4L746.6 469.0L747.4 467.7L748.2 467.3L749.0 465.3L749.8 464.0L750.6 463.1L751.4 461.1L752.2 460.0L753.0 458.2L753.8 460.2L754.6 461.6L755.4 461.7L756.2 464.4L757.0 466.9L757.8 468.2L758.6 468.0L759.4 469.2L760.2 469.0L761.0 472.2L761.8 470.0L762.6 472.3L763.4 474.1L764.2 474.9L765.0 475.3L765.8 476.3L766.6 474.3L767.4 474.9L768.2 473.9L769.0 473.8L769.8 476.6L770.6 473.6L771.4 476.7L772.2 476.1L773.0 480.1L773.8 481.7L774.6 481.5L775.4 484.5L776.2 482.8L777.0 484.1L777.8 483.1L778.6 481.7L779.4 481.4L780.2 481.1L781.0 481.3L781.8 480.4L782.6 482.0L783.4 478.2L784.2 476.5L785.0 474.7L785.8 473.6L786.6 472.3L787.4 472.2L788.2 476.7L789.0 478.5L789.8 480.1L790.6 481.6L791.4 483.2L792.2 483.0L793.0 480.8L793.8 477.1L794.6 478.1L795.4 479.3L796.2 481.5L797.0 481.8L797.8 483.2L798.6 484.4L799.4 486.1L800.2 487.7L801.0 488.2L801.8 489.4L802.6 487.2L803.4 486.1L804.2 487.5L805.0 486.6L805.8 486.9L806.6 487.5L807.4 485.1L808.2 483.0L809.0 485.5L809.8 485.2L810.6 481.6L811.4 481.6L812.2 483.7L813.0 482.0L813.8 483.7L814.6 485.0L815.4 487.7L816.2 488.1L817.0 493.8L817.8 495.7L818.6 500.7L819.4 504.9L820.2 503.2L821.0 503.7L821.8 501.2L822.6 501.4L823.4 499.6L824.2 499.1L825.0 498.2L825.8 498.1L826.6 497.1L827.4 494.6L828.2 495.2L829.0 496.3L829.8 495.1L830.6 494.8L831.4 496.4L832.2 497.2L833.0 498.7L833.8 497.5L834.6 497.5L835.4 499.1L836.2 496.0L837.0 496.7L837.8 496.3L838.6 495.5L839.4 496.8L840.2 495.3L841.0 496.6L841.8 493.9L842.6 495.6L843.4 498.5L844.2 498.7L845.0 499.2L845.8 499.8L846.6 498.7L847.4 498.3L848.2 498.1L849.0 498.5L849.8 497.3L850.6 497.4L851.4 498.4L852.2 496.3L853.0 496.9L853.8 498.5L854.6 497.4L855.4 497.2L856.2 499.0L857.0 497.6L857.8 497.1L858.6 498.8L859.4 500.2L860.2 496.5L861.0 496.6L861.8 497.0L862.6 495.9L863.4 498.2L864.2 496.2L865.0 495.8L865.8 497.3L866.6 496.8L867.4 497.2L868.2 497.6L869.0 499.5L869.8 494.9L870.6 498.2L871.4 499.9L872.2 500.1L873.0 501.3L873.8 499.7L874.6 499.2L875.4 498.7L876.2 497.7L877.0 499.7L877.8 496.9L878.6 498.4L879.4 498.5L880.2 498.8L881.0 496.4L881.8 496.8L882.6 495.3L883.4 491.9L884.2 489.3L885.0 487.5L885.8 486.6L886.6 487.5L887.4 488.4L888.2 487.5L889.0 487.6L889.8 488.7L890.6 491.4L891.4 492.1L892.2 489.7L893.0 489.7L893.8 489.4L894.6 489.4L895.4 488.1L896.2 489.0L897.0 491.0L897.8 492.8L898.6 492.8L899.4 491.0L900.2 492.3L901.0 491.0L901.8 490.6L902.6 489.6L903.4 489.6L904.2 489.8L905.0 491.5L905.8 491.2L906.6 491.7L907.4 492.2L908.2 492.1L909.0 493.3L909.8 495.4L910.6 495.9L911.4 498.0L912.2 497.4L913.0 498.1L913.8 497.6L914.6 500.5L915.4 499.5L916.2 503.1L917.0 501.6L917.8 502.7L918.6 501.5L919.4 502.1L920.2 501.5L921.0 503.2L921.8 501.5L922.6 499.4L923.4 497.9L924.2 499.1L925.0 498.2L925.8 497.1L926.6 499.1L927.4 499.3L928.2 500.6L929.0 500.6L929.8 500.3L930.6 500.2L931.4 498.8L932.2 501.8L933.0 502.6L933.8 501.6L934.6 504.0L935.4 505.6L936.2 505.4L937.0 506.7L937.8 504.9L938.6 504.9L939.4 503.4L940.2 504.7L941.0 504.8L941.8 506.7L942.6 507.7L943.4 507.2L944.2 507.2L945.0 505.3L945.8 502.9L946.6 503.0L947.4 501.1L948.2 503.7L949.0 504.5L949.8 504.3L950.6 502.9L951.4 504.1L952.2 505.4L953.0 505.0L953.8 506.6L954.6 507.2L955.4 507.7L956.2 506.9L957.0 505.7L957.8 505.5L958.6 506.3L959.4 507.8L960.2 508.3L961.0 506.1L961.8 501.1L962.6 499.7L963.4 499.2L964.2 499.7L965.0 501.3L965.8 501.0L966.6 505.4" stroke="#ff0000" stroke-width="1.3" fill="none" stroke-linejoin="round"/>
<path d="M4.0 418.0H1016.2" stroke="#c2c2c2" stroke-width="2.0"/>
<path d="M5.3 528.0H970.1" stroke="#9c9c9c" stroke-width="1.5"/>
<path d="M969.5 419.0V528.5" stroke="#d8d8d8" stroke-width="1.1"/>
<text transform="translate(5.60 429.00) scale(0.80 1)" x="3.02" y="0" font-size="10.6" fill="#b2b2b2" class="n">[</text>
<text transform="translate(5.60 428.70)" x="9.68" y="0" font-size="9.7" fill="#b2b2b2" class="w">金</text>
<text transform="translate(5.60 429.00) scale(0.80 1)" x="27.23 33.27 39.32 45.37 51.42" y="0" font-size="10.6" fill="#b2b2b2" class="n">23/08</text>
<text transform="translate(5.60 429.00) scale(0.80 1)" x="63.53 69.58 75.63 81.68 87.73" y="0" font-size="10.6" fill="#b2b2b2" class="n">7,529</text>
<text transform="translate(5.60 429.90)" x="77.44" y="0" font-size="14" fill="#b2b2b2" class="w">×</text>
<text transform="translate(5.60 429.00) scale(0.80 1)" x="105.88 111.93 117.98 124.03 130.08" y="0" font-size="10.6" fill="#b2b2b2" class="n">1.00]</text>
<text transform="translate(5.60 428.70)" x="111.32" y="0" font-size="9.7" fill="#b2b2b2" class="w">－</text>
<text transform="translate(5.60 429.00) scale(0.80 1)" x="148.23" y="0" font-size="10.6" fill="#b2b2b2" class="n">[</text>
<text transform="translate(5.60 428.70)" x="125.84 135.52" y="0" font-size="9.7" fill="#b2b2b2" class="w">白金</text>
<text transform="translate(5.60 429.00) scale(0.80 1)" x="184.53 190.58 196.63 202.68 208.73" y="0" font-size="10.6" fill="#b2b2b2" class="n">23/08</text>
<text transform="translate(5.60 429.00) scale(0.80 1)" x="220.83 226.88 232.93 238.98 245.03" y="0" font-size="10.6" fill="#b2b2b2" class="n">3,860</text>
<text transform="translate(5.60 429.90)" x="203.28" y="0" font-size="14" fill="#b2b2b2" class="w">×</text>
<text transform="translate(5.60 429.00) scale(0.80 1)" x="263.18 269.23 275.28 281.33 287.38" y="0" font-size="10.6" fill="#b2b2b2" class="n">1.00]</text>
<text transform="translate(5.60 428.70)" x="242.00 251.68" y="0" font-size="9.7" fill="#b2b2b2" class="w">終値</text>
<text transform="translate(5.60 428.70)" x="266.20 275.88" y="0" font-size="9.7" fill="#b2b2b2" class="w">時刻</text>
<text transform="translate(5.60 429.00) scale(0.80 1)" x="353.93 359.98 366.03 372.08 378.13 384.18" y="0" font-size="10.6" fill="#b2b2b2" class="n">:06:00</text>
<text transform="translate(5.60 429.00) scale(0.80 1)" x="396.27 402.32 408.37 414.42 420.47" y="0" font-size="10.6" fill="#b2b2b2" class="n">3,669</text>
<text transform="translate(970.70 444.60) scale(0.80 1)" x="3.02 9.07 15.12 21.17 27.23" y="0" font-size="10.6" fill="#b2b2b2" class="n">3,725</text>
<text transform="translate(970.70 471.70) scale(0.80 1)" x="3.02 9.07 15.12 21.17 27.23" y="0" font-size="10.6" fill="#b2b2b2" class="n">3,700</text>
<text transform="translate(970.70 498.60) scale(0.80 1)" x="3.02 9.07 15.12 21.17 27.23" y="0" font-size="10.6" fill="#b2b2b2" class="n">3,675</text>
<text transform="translate(970.70 526.10) scale(0.80 1)" x="3.02 9.07 15.12 21.17 27.23" y="0" font-size="10.6" fill="#b2b2b2" class="n">3,650</text>
<rect x="970" y="499.3" width="46" height="16.2" fill="#d2d2d2"/>
<text transform="translate(980.40 510.00) scale(0.80 1)" x="3.02 9.07 15.12 21.17 27.23" y="0" font-size="10.6" fill="#000" font-weight="bold" class="n">3,669</text>
<text transform="translate(16.20 535.70) scale(0.80 1)" x="3.02 9.07" y="0" font-size="10.6" fill="#f0f0f0" font-weight="bold" class="n">06</text>
<text transform="translate(41.90 535.70) scale(0.80 1)" x="3.02 9.07" y="0" font-size="10.6" fill="#b2b2b2" class="n">09</text>
<text transform="translate(89.90 535.70) scale(0.80 1)" x="3.02 9.07" y="0" font-size="10.6" fill="#b2b2b2" class="n">10</text>
<text transform="translate(138.30 535.70) scale(0.80 1)" x="3.02 9.07" y="0" font-size="10.6" fill="#b2b2b2" class="n">11</text>
<text transform="translate(186.15 535.70) scale(0.80 1)" x="3.02 9.07" y="0" font-size="10.6" fill="#b2b2b2" class="n">12</text>
<text transform="translate(234.30 535.70) scale(0.80 1)" x="3.02 9.07" y="0" font-size="10.6" fill="#b2b2b2" class="n">13</text>
<text transform="translate(282.30 535.70) scale(0.80 1)" x="3.02 9.07" y="0" font-size="10.6" fill="#b2b2b2" class="n">14</text>
<text transform="translate(317.60 535.70) scale(0.80 1)" x="3.02 9.07" y="0" font-size="10.6" fill="#b2b2b2" class="n">15</text>
<text transform="translate(339.65 535.70) scale(0.80 1)" x="3.02 9.07" y="0" font-size="10.6" fill="#b2b2b2" class="n">16</text>
<text transform="translate(363.40 535.70) scale(0.80 1)" x="3.02 9.07" y="0" font-size="10.6" fill="#b2b2b2" class="n">17</text>
<text transform="translate(412.15 535.70) scale(0.80 1)" x="3.02 9.07" y="0" font-size="10.6" fill="#b2b2b2" class="n">18</text>
<text transform="translate(459.00 535.70) scale(0.80 1)" x="3.02 9.07" y="0" font-size="10.6" fill="#b2b2b2" class="n">19</text>
<text transform="translate(505.30 535.70) scale(0.80 1)" x="3.02 9.07" y="0" font-size="10.6" fill="#b2b2b2" class="n">20</text>
<text transform="translate(551.90 535.70) scale(0.80 1)" x="3.02 9.07" y="0" font-size="10.6" fill="#b2b2b2" class="n">21</text>
<text transform="translate(599.40 535.70) scale(0.80 1)" x="3.02 9.07" y="0" font-size="10.6" fill="#b2b2b2" class="n">22</text>
<text transform="translate(648.00 535.70) scale(0.80 1)" x="3.02 9.07" y="0" font-size="10.6" fill="#b2b2b2" class="n">23</text>
<text transform="translate(695.90 535.70) scale(0.80 1)" x="3.02 9.07" y="0" font-size="10.6" fill="#b2b2b2" class="n">00</text>
<text transform="translate(743.65 535.70) scale(0.80 1)" x="3.02 9.07" y="0" font-size="10.6" fill="#b2b2b2" class="n">01</text>
<text transform="translate(791.00 535.70) scale(0.80 1)" x="3.02 9.07" y="0" font-size="10.6" fill="#b2b2b2" class="n">02</text>
<text transform="translate(838.65 535.70) scale(0.80 1)" x="3.02 9.07" y="0" font-size="10.6" fill="#b2b2b2" class="n">03</text>
<text transform="translate(885.15 535.70) scale(0.80 1)" x="3.02 9.07" y="0" font-size="10.6" fill="#b2b2b2" class="n">04</text>
<text transform="translate(931.30 535.70) scale(0.80 1)" x="3.02 9.07" y="0" font-size="10.6" fill="#b2b2b2" class="n">05</text>
<text transform="translate(953.60 535.70) scale(0.80 1)" x="3.02 9.07" y="0" font-size="10.6" fill="#b2b2b2" class="n">06</text>
<text transform="translate(30.20 524.40) scale(0.80 1)" x="3.02 9.07" y="0" font-size="10.6" fill="#b2b2b2" class="n">26</text>
<text transform="translate(696.40 524.40) scale(0.80 1)" x="3.02 9.07" y="0" font-size="10.6" fill="#b2b2b2" class="n">27</text>
<clipPath id="p0"><rect x="6.3" y="40.4" width="962.7" height="146.9"/></clipPath>
<clipPath id="p1"><rect x="6.3" y="205.5" width="962.7" height="195.8"/></clipPath>
<clipPath id="p2"><rect x="6.3" y="419.5" width="962.7" height="107.8"/></clipPath>
<defs><clipPath id="c2"><rect x="960" y="204" width="60" height="30"/></clipPath></defs>
</svg>
</body></html>
